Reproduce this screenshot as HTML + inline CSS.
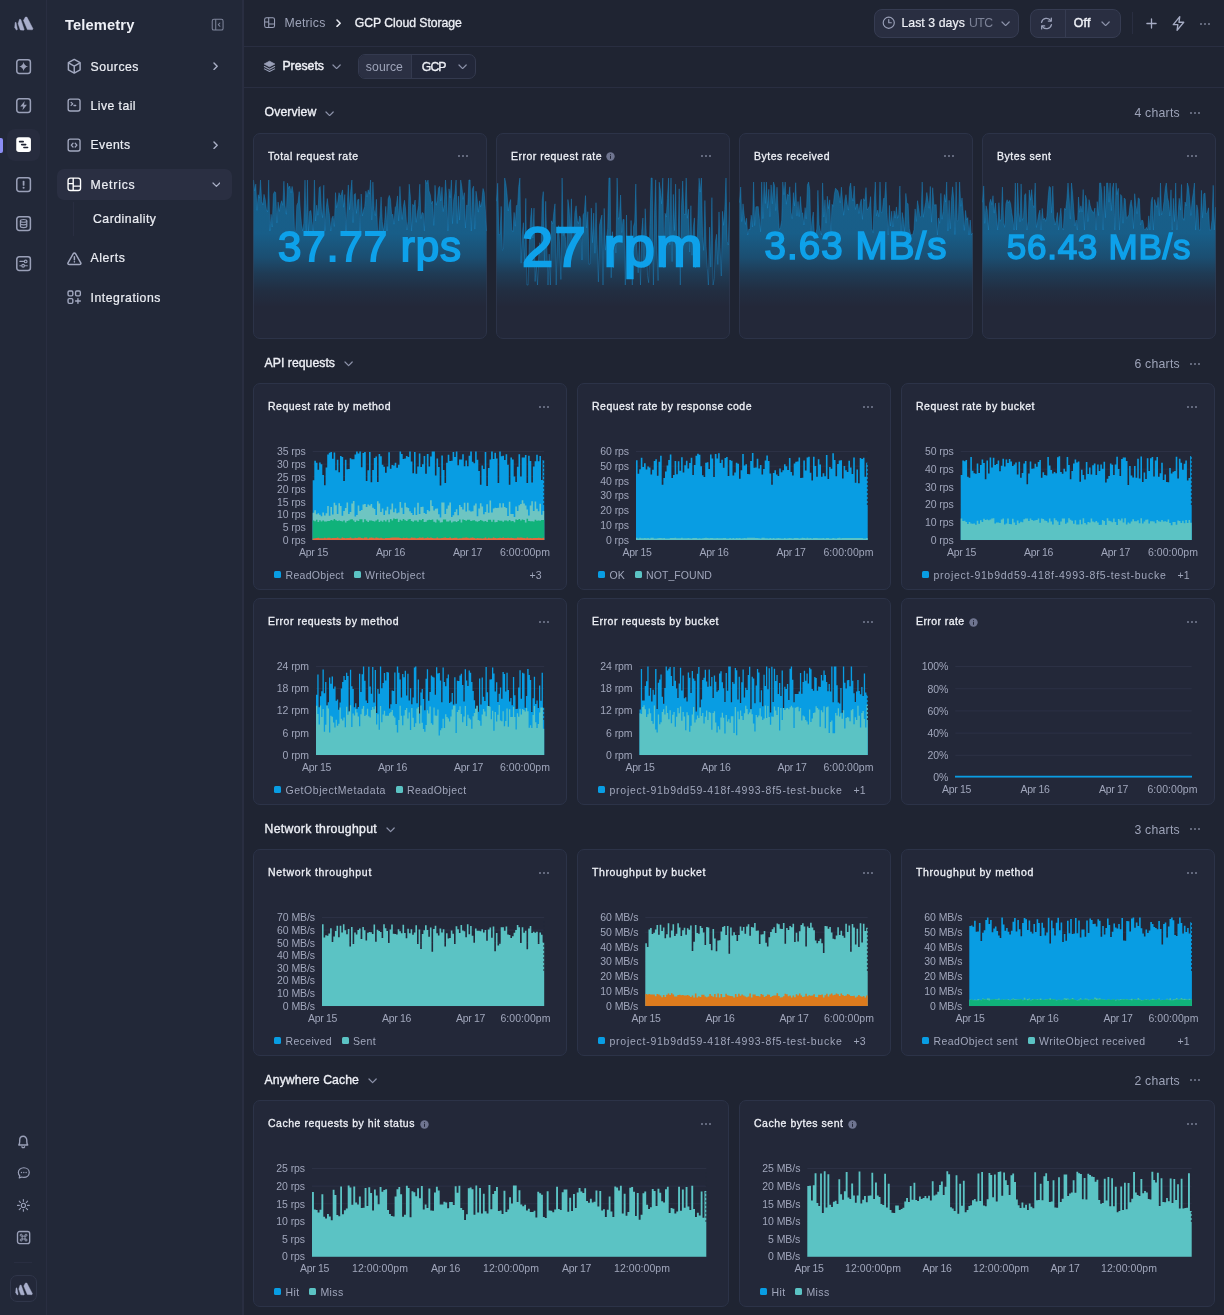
<!DOCTYPE html>
<html lang="en"><head><meta charset="utf-8"><title>Telemetry - GCP Cloud Storage</title>
<style>
html,body{margin:0;padding:0}
body{width:1224px;height:1315px;overflow:hidden;background:#1f2432;position:relative;font-family:"Liberation Sans",sans-serif;-webkit-font-smoothing:antialiased}
.t{position:absolute;white-space:nowrap;display:block}
.b{position:absolute;box-sizing:border-box;display:block}
.card{position:absolute;box-sizing:border-box;background:#232839;border:1px solid #2c3348;border-radius:7px;overflow:hidden}
#root{position:absolute;left:0;top:0;width:1224px;height:1315px;will-change:transform}
</style></head><body><div id="root">
<nav id="rail" aria-label="Products">
<div class="b" style="left:0px;top:0px;width:46px;height:1315px;background:#222838;"></div>
<div class="b" style="left:46px;top:0px;width:1px;height:1315px;background:#292e41;"></div>
<div class="b" style="left:0px;top:138px;width:3px;height:15px;background:#8b8df5;border-radius:0 2px 2px 0;"></div>
<div class="b" style="left:7px;top:129px;width:33px;height:32px;background:#272c3e;border-radius:8px;"></div>
<div class="b" style="left:14px;top:1262px;width:18px;height:1px;background:#292e41;"></div>
<div class="b" style="left:10px;top:1275px;width:27px;height:27px;background:#232839;border:1px solid #30364a;border-radius:7px;"></div>
<svg class="b" style="left:13.9px;top:15.8px;" width="20.5" height="15.5" viewBox="0 0 20.5 15.5" fill="none"><path d="M9.50 4.40 L11.40 1.00 L12.90 1.10 L19.00 12.80 L18.30 13.80 L13.40 13.60Z" fill="#a9afcc" stroke="#a9afcc" stroke-width="0.45" stroke-linejoin="round"/><path d="M4.10 7.70 L5.50 3.30 L6.80 3.50 L10.20 13.40 L9.70 14.20 L6.30 13.90Z" fill="#a9afcc" stroke="#a9afcc" stroke-width="0.45" stroke-linejoin="round"/><path d="M1.20 6.50 L2.00 6.30 L3.40 13.50 L2.40 14.10 L0.70 11.40Z" fill="#a9afcc" stroke="#a9afcc" stroke-width="0.45" stroke-linejoin="round"/></svg>
<svg class="b" style="left:13.8px;top:56.9px;" width="19.2" height="19.2" viewBox="0 0 24 24" fill="none"><rect x="3.5" y="3.5" width="17" height="17" rx="3" stroke="#9aa0b8" stroke-width="1.9" fill="none"/><path d="M12 6.4 C12.7 9.6 14.4 11.3 17.6 12 C14.4 12.7 12.7 14.4 12 17.6 C11.3 14.4 9.6 12.7 6.4 12 C9.6 11.3 11.3 9.6 12 6.4 Z" fill="#9aa0b8"/></svg>
<svg class="b" style="left:13.8px;top:95.9px;" width="19.2" height="19.2" viewBox="0 0 24 24" fill="none"><rect x="3.5" y="3.5" width="17" height="17" rx="3" stroke="#9aa0b8" stroke-width="1.9" fill="none"/><path d="M13.4 6.2 L7.8 13 H11.5 L10.6 17.8 L16.2 11 H12.5 Z" fill="#9aa0b8"/></svg>
<svg class="b" style="left:13.8px;top:135.4px;" width="19.2" height="19.2" viewBox="0 0 24 24" fill="none"><rect x="2.8" y="2.8" width="18.4" height="18.4" rx="3.4" fill="#ffffff"/><path d="M7 8.3 H11.5 M9.6 12 H14.6 M12.4 15.7 H17" stroke="#1f2333" stroke-width="2" stroke-linecap="round"/></svg>
<svg class="b" style="left:13.8px;top:174.9px;" width="19.2" height="19.2" viewBox="0 0 24 24" fill="none"><rect x="3.5" y="3.5" width="17" height="17" rx="3" stroke="#9aa0b8" stroke-width="1.9" fill="none"/><path d="M12 8.2 V12.4" stroke="#9aa0b8" stroke-width="2.2" stroke-linecap="round"/><circle cx="12" cy="15.9" r="1.3" fill="#9aa0b8"/></svg>
<svg class="b" style="left:13.8px;top:214.4px;" width="19.2" height="19.2" viewBox="0 0 24 24" fill="none"><rect x="3.5" y="3.5" width="17" height="17" rx="3" stroke="#9aa0b8" stroke-width="1.9" fill="none"/><ellipse cx="12" cy="8.6" rx="4" ry="1.7" stroke="#9aa0b8" stroke-width="1.5"/><path d="M8 8.6 V15.4 C8 16.4 9.8 17.1 12 17.1 C14.2 17.1 16 16.4 16 15.4 V8.6 M8 12 C8 13 9.8 13.7 12 13.7 C14.2 13.7 16 13 16 12" stroke="#9aa0b8" stroke-width="1.5"/></svg>
<svg class="b" style="left:13.8px;top:253.9px;" width="19.2" height="19.2" viewBox="0 0 24 24" fill="none"><rect x="3.5" y="3.5" width="17" height="17" rx="3" stroke="#9aa0b8" stroke-width="1.9" fill="none"/><path d="M7.4 9.3 H12.4 M7.4 14.7 H9.2 M14 14.7 H16.6" stroke="#9aa0b8" stroke-width="1.5" stroke-linecap="round"/><circle cx="14.6" cy="9.3" r="1.7" stroke="#9aa0b8" stroke-width="1.4"/><circle cx="11.4" cy="14.7" r="1.7" stroke="#9aa0b8" stroke-width="1.4"/></svg>
<svg class="b" style="left:14.15px;top:1131.95px;" width="18.5" height="18.5" viewBox="0 0 24 24" fill="none"><path d="M6.2 16.8 H17.8 C16.8 15.6 16.6 14.4 16.6 12.4 V10.6 C16.6 7.8 14.6 5.6 12 5.6 C9.4 5.6 7.4 7.8 7.4 10.6 V12.4 C7.4 14.4 7.2 15.6 6.2 16.8 Z" stroke="#9aa0b8" stroke-width="1.8" stroke-linejoin="round"/><path d="M10.3 19.2 C10.8 20 11.3 20.3 12 20.3 C12.7 20.3 13.2 20 13.7 19.2" stroke="#9aa0b8" stroke-width="1.8" stroke-linecap="round"/></svg>
<svg class="b" style="left:15.6px;top:1165.2px;" width="15.6" height="15.6" viewBox="0 0 24 24" fill="none"><path d="M12 4.2 C7.2 4.2 3.6 7.4 3.6 11.6 C3.6 13.6 4.4 15.3 5.8 16.6 L5 20 L8.8 18.5 C9.8 18.8 10.9 19 12 19 C16.8 19 20.4 15.8 20.4 11.6 C20.4 7.4 16.8 4.2 12 4.2 Z" stroke="#9aa0b8" stroke-width="1.8" stroke-linejoin="round"/><circle cx="8.4" cy="11.6" r="1.05" fill="#9aa0b8"/><circle cx="12" cy="11.6" r="1.05" fill="#9aa0b8"/><circle cx="15.6" cy="11.6" r="1.05" fill="#9aa0b8"/></svg>
<svg class="b" style="left:16.0px;top:1197.6px;" width="14.8" height="14.8" viewBox="0 0 24 24" fill="none"><circle cx="12" cy="12" r="3.4" stroke="#9aa0b8" stroke-width="1.8"/><path d="M18.60 12.00 L21.60 12.00" stroke="#9aa0b8" stroke-width="1.8" stroke-linecap="round"/><path d="M16.67 16.67 L18.79 18.79" stroke="#9aa0b8" stroke-width="1.8" stroke-linecap="round"/><path d="M12.00 18.60 L12.00 21.60" stroke="#9aa0b8" stroke-width="1.8" stroke-linecap="round"/><path d="M7.33 16.67 L5.21 18.79" stroke="#9aa0b8" stroke-width="1.8" stroke-linecap="round"/><path d="M5.40 12.00 L2.40 12.00" stroke="#9aa0b8" stroke-width="1.8" stroke-linecap="round"/><path d="M7.33 7.33 L5.21 5.21" stroke="#9aa0b8" stroke-width="1.8" stroke-linecap="round"/><path d="M12.00 5.40 L12.00 2.40" stroke="#9aa0b8" stroke-width="1.8" stroke-linecap="round"/><path d="M16.67 7.33 L18.79 5.21" stroke="#9aa0b8" stroke-width="1.8" stroke-linecap="round"/></svg>
<svg class="b" style="left:14.8px;top:1228.6px;" width="17.2" height="17.2" viewBox="0 0 24 24" fill="none"><rect x="3.5" y="3.5" width="17" height="17" rx="3" stroke="#9aa0b8" stroke-width="1.9" fill="none"/><path d="M10 10 H14 V14 H10 Z M10 10 V8.6 A1.4 1.4 0 1 0 8.6 10 H10 M14 10 H15.4 A1.4 1.4 0 1 0 14 8.6 V10 M14 14 V15.4 A1.4 1.4 0 1 0 15.4 14 H14 M10 14 H8.6 A1.4 1.4 0 1 0 10 15.4 V14" stroke="#9aa0b8" stroke-width="1.3"/></svg>
<svg class="b" style="left:14.6px;top:1282.2px;" width="18.86" height="14.26" viewBox="0 0 18.86 14.26" fill="none"><path d="M8.74 4.05 L10.49 0.92 L11.87 1.01 L17.48 11.78 L16.84 12.70 L12.33 12.51Z" fill="#a9afcc" stroke="#a9afcc" stroke-width="0.41" stroke-linejoin="round"/><path d="M3.77 7.08 L5.06 3.04 L6.26 3.22 L9.38 12.33 L8.92 13.06 L5.80 12.79Z" fill="#a9afcc" stroke="#a9afcc" stroke-width="0.41" stroke-linejoin="round"/><path d="M1.10 5.98 L1.84 5.80 L3.13 12.42 L2.21 12.97 L0.64 10.49Z" fill="#a9afcc" stroke="#a9afcc" stroke-width="0.41" stroke-linejoin="round"/></svg>
</nav>
<aside id="sidebar" aria-label="Telemetry">
<div class="b" style="left:47px;top:0px;width:195.5px;height:1315px;background:#222838;"></div>
<div class="b" style="left:242.4px;top:0px;width:1.6px;height:1315px;background:#292e41;"></div>
<span class="t" style="left:65.00px;top:14.60px;font-size:14.7px;line-height:20px;color:#eef0f6;font-weight:700;letter-spacing:0.126px;">Telemetry</span>
<div class="b" style="left:57px;top:169px;width:175px;height:31px;background:#2a2f42;border-radius:7px;"></div>
<span class="t" style="left:90.50px;top:57.60px;font-size:12.25px;line-height:18px;color:#eceef4;letter-spacing:0.509px;-webkit-text-stroke:0.2px #eceef4;">Sources</span>
<span class="t" style="left:90.50px;top:96.50px;font-size:12.25px;line-height:18px;color:#eceef4;letter-spacing:0.440px;-webkit-text-stroke:0.2px #eceef4;">Live tail</span>
<span class="t" style="left:90.50px;top:136.00px;font-size:12.25px;line-height:18px;color:#eceef4;letter-spacing:0.425px;-webkit-text-stroke:0.2px #eceef4;">Events</span>
<span class="t" style="left:90.50px;top:175.50px;font-size:12.25px;line-height:18px;color:#eceef4;letter-spacing:0.790px;-webkit-text-stroke:0.2px #eceef4;">Metrics</span>
<span class="t" style="left:93.00px;top:209.50px;font-size:12.25px;line-height:18px;color:#eceef4;letter-spacing:0.512px;-webkit-text-stroke:0.2px #eceef4;">Cardinality</span>
<span class="t" style="left:90.50px;top:249.00px;font-size:12.25px;line-height:18px;color:#eceef4;letter-spacing:0.614px;-webkit-text-stroke:0.2px #eceef4;">Alerts</span>
<span class="t" style="left:90.50px;top:288.50px;font-size:12.25px;line-height:18px;color:#eceef4;letter-spacing:0.540px;-webkit-text-stroke:0.2px #eceef4;">Integrations</span>
<div class="b" style="left:73px;top:202px;width:1px;height:34px;background:#292e41;"></div>
<svg class="b" style="left:209.55px;top:16.85px;" width="15.3" height="15.3" viewBox="0 0 24 24" fill="none"><rect x="3.5" y="3.5" width="17" height="17" rx="2.6" stroke="#7f859b" stroke-width="1.6"/><path d="M9 3.5 V20.5" stroke="#7f859b" stroke-width="1.6"/><path d="M15.6 9.4 L13 12 L15.6 14.6" stroke="#7f859b" stroke-width="1.6" stroke-linecap="round" stroke-linejoin="round"/></svg>
<svg class="b" style="left:65.05px;top:57.05px;" width="18.5" height="18.5" viewBox="0 0 24 24" fill="none"><path d="M12 3.2 L19.6 7.4 V16.6 L12 20.8 L4.4 16.6 V7.4 Z" stroke="#a3a9c0" stroke-width="1.9" stroke-linejoin="round"/><path d="M4.6 7.6 L12 11.8 L19.4 7.6 M12 11.8 V20.6" stroke="#a3a9c0" stroke-width="1.9" stroke-linejoin="round"/></svg>
<svg class="b" style="left:66.0px;top:97.4px;" width="16.2" height="16.2" viewBox="0 0 24 24" fill="none"><rect x="3.2" y="3.2" width="17.6" height="17.6" rx="3" stroke="#a3a9c0" stroke-width="2.0"/><path d="M7.6 8 L10 10.2 L7.6 12.4 M11.8 12.6 H14.4" stroke="#a3a9c0" stroke-width="1.9" stroke-linecap="round" stroke-linejoin="round"/></svg>
<svg class="b" style="left:66.0px;top:136.9px;" width="16.2" height="16.2" viewBox="0 0 24 24" fill="none"><rect x="3.2" y="3.2" width="17.6" height="17.6" rx="3" stroke="#a3a9c0" stroke-width="2.0"/><path d="M10.4 9.2 L7.8 12 L10.4 14.8 M13.6 9.2 L16.2 12 L13.6 14.8" stroke="#a3a9c0" stroke-width="1.9" stroke-linecap="round" stroke-linejoin="round"/></svg>
<svg class="b" style="left:66.0px;top:176.2px;" width="16.6" height="16.6" viewBox="0 0 24 24" fill="none"><rect x="3" y="3" width="18" height="18" rx="3.4" stroke="#ffffff" stroke-width="2"/><path d="M10.4 3 V21 M3 11 H10.4 M10.4 14.6 H21" stroke="#ffffff" stroke-width="2"/></svg>
<svg class="b" style="left:64.9px;top:248.6px;" width="18.8" height="18.8" viewBox="0 0 24 24" fill="none"><path d="M10.39 6.37 Q12.00 3.60 13.61 6.37 L19.79 17.03 Q21.40 19.80 18.20 19.80 L5.80 19.80 Q2.60 19.80 4.21 17.03Z" stroke="#a3a9c0" stroke-width="1.9" stroke-linejoin="round"/><path d="M12 10 V13.6" stroke="#a3a9c0" stroke-width="1.9" stroke-linecap="round"/><circle cx="12" cy="16.4" r="1" fill="#a3a9c0"/></svg>
<svg class="b" style="left:65.9px;top:289.3px;" width="16.4" height="16.4" viewBox="0 0 24 24" fill="none"><rect x="3" y="3" width="7" height="7" rx="1.8" stroke="#a3a9c0" stroke-width="2.0"/><rect x="14" y="3" width="7" height="7" rx="1.8" stroke="#a3a9c0" stroke-width="2.0"/><rect x="3" y="14" width="7" height="7" rx="1.8" stroke="#a3a9c0" stroke-width="2.0"/><path d="M17.5 14 V21 M14 17.5 H21" stroke="#a3a9c0" stroke-width="2.0" stroke-linecap="round"/></svg>
<svg class="b" style="left:213.4px;top:62.0px;" width="5.2" height="8.4" viewBox="0 0 5.2 8.4" fill="none"><path d="M1 1 L4.2 4.2 L1 7.4" stroke="#aab0c6" stroke-width="1.4" stroke-linecap="round" stroke-linejoin="round"/></svg>
<svg class="b" style="left:213.4px;top:141.0px;" width="5.2" height="8.4" viewBox="0 0 5.2 8.4" fill="none"><path d="M1 1 L4.2 4.2 L1 7.4" stroke="#aab0c6" stroke-width="1.4" stroke-linecap="round" stroke-linejoin="round"/></svg>
<svg class="b" style="left:211.6px;top:182.1px;" width="8.8" height="5.4" viewBox="0 0 8.8 5.4" fill="none"><path d="M1 1 L4.4 4.4 L7.8 1" stroke="#aab0c6" stroke-width="1.2" stroke-linecap="round" stroke-linejoin="round"/></svg>
</aside>
<header id="topbar">
<div class="b" style="left:244px;top:46px;width:980px;height:1px;background:#292e41;"></div>
<span class="t" style="left:284.50px;top:15.00px;font-size:12.25px;line-height:16px;color:#9da3b8;letter-spacing:0.218px;">Metrics</span>
<span class="t" style="left:354.80px;top:15.00px;font-size:12.25px;line-height:16px;color:#eef0f6;letter-spacing:-0.062px;-webkit-text-stroke:0.3px #eef0f6;">GCP Cloud Storage</span>
<div class="b" style="left:873.5px;top:9px;width:145.5px;height:29px;background:#292e41;border:1px solid #363c52;border-radius:8px;"></div>
<span class="t" style="left:901.40px;top:15.00px;font-size:12.25px;line-height:16px;color:#eef0f6;letter-spacing:0.077px;-webkit-text-stroke:0.2px #eef0f6;">Last 3 days</span>
<span class="t" style="left:969.00px;top:15.00px;font-size:12.25px;line-height:16px;color:#7d8398;letter-spacing:-0.559px;">UTC</span>
<div class="b" style="left:1029.5px;top:9px;width:91.5px;height:29px;background:#292e41;border:1px solid #363c52;border-radius:8px;"></div>
<div class="b" style="left:1064.5px;top:10px;width:1px;height:27px;background:#363c52;"></div>
<span class="t" style="left:1073.70px;top:15.00px;font-size:12.25px;line-height:16px;color:#eef0f6;letter-spacing:0.329px;-webkit-text-stroke:0.45px #eef0f6;">Off</span>
<div class="b" style="left:1132px;top:12px;width:1px;height:22px;background:#292e41;"></div>
<svg class="b" style="left:263.1px;top:16.4px;" width="13.2" height="13.2" viewBox="0 0 24 24" fill="none"><rect x="3" y="3" width="18" height="18" rx="3.4" stroke="#9aa0b8" stroke-width="1.9"/><path d="M10.4 3 V21 M3 11 H10.4 M10.4 14.6 H21" stroke="#9aa0b8" stroke-width="1.9"/></svg>
<svg class="b" style="left:336.0px;top:19.1px;" width="5.2" height="8.4" viewBox="0 0 5.2 8.4" fill="none"><path d="M1 1 L4.2 4.2 L1 7.4" stroke="#e6e8f0" stroke-width="1.5" stroke-linecap="round" stroke-linejoin="round"/></svg>
<svg class="b" style="left:880.95px;top:15.25px;" width="15.5" height="15.5" viewBox="0 0 24 24" fill="none"><circle cx="12" cy="12" r="8.6" stroke="#9aa0b8" stroke-width="1.8"/><path d="M12 7 V12 H16" stroke="#9aa0b8" stroke-width="1.8" stroke-linecap="round" stroke-linejoin="round"/></svg>
<svg class="b" style="left:1001.1px;top:20.7px;" width="9.2" height="5.6" viewBox="0 0 9.2 5.6" fill="none"><path d="M1 1 L4.6 4.6 L8.2 1" stroke="#8d93aa" stroke-width="1.2" stroke-linecap="round" stroke-linejoin="round"/></svg>
<svg class="b" style="left:1038.0px;top:14.5px;" width="17" height="17" viewBox="0 0 24 24" fill="none"><path d="M5 10.4 A7.2 7.2 0 0 1 18.2 8.2 M19 13.6 A7.2 7.2 0 0 1 5.8 15.8" stroke="#9aa0b8" stroke-width="1.8" stroke-linecap="round"/><path d="M18.8 4.4 V8.6 H14.6 M5.2 19.6 V15.4 H9.4" stroke="#9aa0b8" stroke-width="1.8" stroke-linecap="round" stroke-linejoin="round"/></svg>
<svg class="b" style="left:1101.1px;top:20.7px;" width="9.2" height="5.6" viewBox="0 0 9.2 5.6" fill="none"><path d="M1 1 L4.6 4.6 L8.2 1" stroke="#8d93aa" stroke-width="1.2" stroke-linecap="round" stroke-linejoin="round"/></svg>
<svg class="b" style="left:1144.9px;top:16.5px;" width="13" height="13" viewBox="0 0 24 24" fill="none"><path d="M12 3.5 V20.5 M3.5 12 H20.5" stroke="#a6acc4" stroke-width="2.4" stroke-linecap="round"/></svg>
<svg class="b" style="left:1168.8px;top:13.5px;" width="19" height="19" viewBox="0 0 24 24" fill="none"><path d="M13.6 3.4 L5.4 13.4 H11.2 L10.2 20.6 L18.6 10.4 H12.6 Z" stroke="#a6acc4" stroke-width="1.7" stroke-linejoin="round"/></svg>
<svg class="b" style="left:1199px;top:21.5px;" width="12" height="4" viewBox="0 0 12 4" fill="none"><circle cx="2" cy="2" r="0.95" fill="#7f859b"/><circle cx="6" cy="2" r="0.95" fill="#7f859b"/><circle cx="10" cy="2" r="0.95" fill="#7f859b"/></svg>
</header>
<div id="filterbar" role="toolbar">
<div class="b" style="left:244px;top:87px;width:980px;height:1px;background:#292e41;"></div>
<span class="t" style="left:282.40px;top:58.00px;font-size:12.25px;line-height:16px;color:#eef0f6;letter-spacing:0.010px;-webkit-text-stroke:0.45px #eef0f6;">Presets</span>
<div class="b" style="left:357.5px;top:54px;width:118.5px;height:24.5px;background:#222739;border:1px solid #343a4f;border-radius:7px;"></div>
<div class="b" style="left:358.5px;top:55px;width:52px;height:22.5px;background:#2b3043;border-radius:6px 0 0 6px;"></div>
<div class="b" style="left:410.5px;top:55px;width:1px;height:22.5px;background:#343a4f;"></div>
<span class="t" style="left:365.80px;top:58.50px;font-size:12.25px;line-height:16px;color:#9da3b8;letter-spacing:0.072px;">source</span>
<span class="t" style="left:421.80px;top:58.50px;font-size:12.25px;line-height:16px;color:#eef0f6;letter-spacing:-0.915px;-webkit-text-stroke:0.3px #eef0f6;">GCP</span>
<svg class="b" style="left:261.5px;top:58.5px;" width="15" height="15" viewBox="0 0 24 24" fill="none"><path d="M12 3.6 L20.4 8 L12 12.4 L3.6 8 Z" fill="#9aa0b8" stroke="#9aa0b8" stroke-width="1.4" stroke-linejoin="round"/><path d="M3.8 12 L12 16.3 L20.2 12 M3.8 15.8 L12 20.1 L20.2 15.8" stroke="#9aa0b8" stroke-width="1.7" stroke-linecap="round" stroke-linejoin="round"/></svg>
<svg class="b" style="left:332.4px;top:63.7px;" width="9.2" height="5.6" viewBox="0 0 9.2 5.6" fill="none"><path d="M1 1 L4.6 4.6 L8.2 1" stroke="#8d93aa" stroke-width="1.2" stroke-linecap="round" stroke-linejoin="round"/></svg>
<svg class="b" style="left:457.7px;top:63.7px;" width="9.2" height="5.6" viewBox="0 0 9.2 5.6" fill="none"><path d="M1 1 L4.6 4.6 L8.2 1" stroke="#8d93aa" stroke-width="1.2" stroke-linecap="round" stroke-linejoin="round"/></svg>
</div>
<main id="dashboard">
<span class="t" style="left:264.50px;top:104.30px;font-size:12.25px;line-height:16px;color:#eef0f6;letter-spacing:0.118px;-webkit-text-stroke:0.35px #eef0f6;">Overview</span>
<span class="t" style="left:1134.40px;top:105.00px;font-size:12.25px;line-height:16px;color:#9da3b8;letter-spacing:0.253px;">4 charts</span>
<svg class="b" style="left:1189px;top:110.8px;" width="12" height="4" viewBox="0 0 12 4" fill="none"><circle cx="2" cy="2" r="0.95" fill="#7f859b"/><circle cx="6" cy="2" r="0.95" fill="#7f859b"/><circle cx="10" cy="2" r="0.95" fill="#7f859b"/></svg>
<svg class="b" style="left:325.4px;top:110.5px;" width="9.2" height="5.6" viewBox="0 0 9.2 5.6" fill="none"><path d="M1 1 L4.6 4.6 L8.2 1" stroke="#8d93aa" stroke-width="1.2" stroke-linecap="round" stroke-linejoin="round"/></svg>
<span class="t" style="left:264.50px;top:355.10px;font-size:12.25px;line-height:16px;color:#eef0f6;letter-spacing:0.030px;-webkit-text-stroke:0.35px #eef0f6;">API requests</span>
<span class="t" style="left:1134.40px;top:355.80px;font-size:12.25px;line-height:16px;color:#9da3b8;letter-spacing:0.253px;">6 charts</span>
<svg class="b" style="left:1189px;top:361.6px;" width="12" height="4" viewBox="0 0 12 4" fill="none"><circle cx="2" cy="2" r="0.95" fill="#7f859b"/><circle cx="6" cy="2" r="0.95" fill="#7f859b"/><circle cx="10" cy="2" r="0.95" fill="#7f859b"/></svg>
<svg class="b" style="left:343.9px;top:361.3px;" width="9.2" height="5.6" viewBox="0 0 9.2 5.6" fill="none"><path d="M1 1 L4.6 4.6 L8.2 1" stroke="#8d93aa" stroke-width="1.2" stroke-linecap="round" stroke-linejoin="round"/></svg>
<span class="t" style="left:264.50px;top:820.90px;font-size:12.25px;line-height:16px;color:#eef0f6;letter-spacing:0.311px;-webkit-text-stroke:0.35px #eef0f6;">Network throughput</span>
<span class="t" style="left:1134.40px;top:821.60px;font-size:12.25px;line-height:16px;color:#9da3b8;letter-spacing:0.253px;">3 charts</span>
<svg class="b" style="left:1189px;top:827.4px;" width="12" height="4" viewBox="0 0 12 4" fill="none"><circle cx="2" cy="2" r="0.95" fill="#7f859b"/><circle cx="6" cy="2" r="0.95" fill="#7f859b"/><circle cx="10" cy="2" r="0.95" fill="#7f859b"/></svg>
<svg class="b" style="left:385.9px;top:827.1px;" width="9.2" height="5.6" viewBox="0 0 9.2 5.6" fill="none"><path d="M1 1 L4.6 4.6 L8.2 1" stroke="#8d93aa" stroke-width="1.2" stroke-linecap="round" stroke-linejoin="round"/></svg>
<span class="t" style="left:264.50px;top:1071.90px;font-size:12.25px;line-height:16px;color:#eef0f6;letter-spacing:0.086px;-webkit-text-stroke:0.35px #eef0f6;">Anywhere Cache</span>
<span class="t" style="left:1134.40px;top:1072.60px;font-size:12.25px;line-height:16px;color:#9da3b8;letter-spacing:0.253px;">2 charts</span>
<svg class="b" style="left:1189px;top:1078.4px;" width="12" height="4" viewBox="0 0 12 4" fill="none"><circle cx="2" cy="2" r="0.95" fill="#7f859b"/><circle cx="6" cy="2" r="0.95" fill="#7f859b"/><circle cx="10" cy="2" r="0.95" fill="#7f859b"/></svg>
<svg class="b" style="left:367.9px;top:1078.1px;" width="9.2" height="5.6" viewBox="0 0 9.2 5.6" fill="none"><path d="M1 1 L4.6 4.6 L8.2 1" stroke="#8d93aa" stroke-width="1.2" stroke-linecap="round" stroke-linejoin="round"/></svg>
<div class="card" style="left:253px;top:132.6px;width:234px;height:206.4px"></div>
<span class="t" style="left:268.00px;top:148.60px;font-size:10.5px;line-height:14px;color:#eef0f6;letter-spacing:0.521px;-webkit-text-stroke:0.3px #eef0f6;">Total request rate</span>
<svg class="b" style="left:457px;top:154px;" width="12" height="4" viewBox="0 0 12 4" fill="none"><circle cx="2" cy="2" r="0.95" fill="#7f859b"/><circle cx="6" cy="2" r="0.95" fill="#7f859b"/><circle cx="10" cy="2" r="0.95" fill="#7f859b"/></svg>
<div class="card" style="left:496px;top:132.6px;width:234px;height:206.4px"></div>
<span class="t" style="left:511.00px;top:148.60px;font-size:10.5px;line-height:14px;color:#eef0f6;letter-spacing:0.484px;-webkit-text-stroke:0.3px #eef0f6;">Error request rate</span>
<svg class="b" style="left:700px;top:154px;" width="12" height="4" viewBox="0 0 12 4" fill="none"><circle cx="2" cy="2" r="0.95" fill="#7f859b"/><circle cx="6" cy="2" r="0.95" fill="#7f859b"/><circle cx="10" cy="2" r="0.95" fill="#7f859b"/></svg>
<svg class="b" style="left:606.0px;top:151.5px;" width="9" height="9" viewBox="0 0 9 9" fill="none"><circle cx="4.5" cy="4.5" r="4.2" fill="#6f7590"/><rect x="4" y="3.9" width="1" height="2.9" fill="#232738"/><rect x="4" y="2.2" width="1" height="1" fill="#232738"/></svg>
<div class="card" style="left:739px;top:132.6px;width:234px;height:206.4px"></div>
<span class="t" style="left:754.00px;top:148.60px;font-size:10.5px;line-height:14px;color:#eef0f6;letter-spacing:0.510px;-webkit-text-stroke:0.3px #eef0f6;">Bytes received</span>
<svg class="b" style="left:943px;top:154px;" width="12" height="4" viewBox="0 0 12 4" fill="none"><circle cx="2" cy="2" r="0.95" fill="#7f859b"/><circle cx="6" cy="2" r="0.95" fill="#7f859b"/><circle cx="10" cy="2" r="0.95" fill="#7f859b"/></svg>
<div class="card" style="left:982px;top:132.6px;width:234px;height:206.4px"></div>
<span class="t" style="left:997.00px;top:148.60px;font-size:10.5px;line-height:14px;color:#eef0f6;letter-spacing:0.548px;-webkit-text-stroke:0.3px #eef0f6;">Bytes sent</span>
<svg class="b" style="left:1186px;top:154px;" width="12" height="4" viewBox="0 0 12 4" fill="none"><circle cx="2" cy="2" r="0.95" fill="#7f859b"/><circle cx="6" cy="2" r="0.95" fill="#7f859b"/><circle cx="10" cy="2" r="0.95" fill="#7f859b"/></svg>
<div class="card" style="left:253px;top:383.4px;width:314px;height:206.6px"></div>
<span class="t" style="left:268.00px;top:399.40px;font-size:10.5px;line-height:14px;color:#eef0f6;letter-spacing:0.497px;-webkit-text-stroke:0.3px #eef0f6;">Request rate by method</span>
<svg class="b" style="left:538px;top:405px;" width="12" height="4" viewBox="0 0 12 4" fill="none"><circle cx="2" cy="2" r="0.95" fill="#7f859b"/><circle cx="6" cy="2" r="0.95" fill="#7f859b"/><circle cx="10" cy="2" r="0.95" fill="#7f859b"/></svg>
<div class="card" style="left:577px;top:383.4px;width:314px;height:206.6px"></div>
<span class="t" style="left:592.00px;top:399.40px;font-size:10.5px;line-height:14px;color:#eef0f6;letter-spacing:0.485px;-webkit-text-stroke:0.3px #eef0f6;">Request rate by response code</span>
<svg class="b" style="left:862px;top:405px;" width="12" height="4" viewBox="0 0 12 4" fill="none"><circle cx="2" cy="2" r="0.95" fill="#7f859b"/><circle cx="6" cy="2" r="0.95" fill="#7f859b"/><circle cx="10" cy="2" r="0.95" fill="#7f859b"/></svg>
<div class="card" style="left:901px;top:383.4px;width:314px;height:206.6px"></div>
<span class="t" style="left:916.00px;top:399.40px;font-size:10.5px;line-height:14px;color:#eef0f6;letter-spacing:0.501px;-webkit-text-stroke:0.3px #eef0f6;">Request rate by bucket</span>
<svg class="b" style="left:1186px;top:405px;" width="12" height="4" viewBox="0 0 12 4" fill="none"><circle cx="2" cy="2" r="0.95" fill="#7f859b"/><circle cx="6" cy="2" r="0.95" fill="#7f859b"/><circle cx="10" cy="2" r="0.95" fill="#7f859b"/></svg>
<div class="card" style="left:253px;top:598.4px;width:314px;height:206.6px"></div>
<span class="t" style="left:268.00px;top:614.40px;font-size:10.5px;line-height:14px;color:#eef0f6;letter-spacing:0.522px;-webkit-text-stroke:0.3px #eef0f6;">Error requests by method</span>
<svg class="b" style="left:538px;top:620px;" width="12" height="4" viewBox="0 0 12 4" fill="none"><circle cx="2" cy="2" r="0.95" fill="#7f859b"/><circle cx="6" cy="2" r="0.95" fill="#7f859b"/><circle cx="10" cy="2" r="0.95" fill="#7f859b"/></svg>
<div class="card" style="left:577px;top:598.4px;width:314px;height:206.6px"></div>
<span class="t" style="left:592.00px;top:614.40px;font-size:10.5px;line-height:14px;color:#eef0f6;letter-spacing:0.526px;-webkit-text-stroke:0.3px #eef0f6;">Error requests by bucket</span>
<svg class="b" style="left:862px;top:620px;" width="12" height="4" viewBox="0 0 12 4" fill="none"><circle cx="2" cy="2" r="0.95" fill="#7f859b"/><circle cx="6" cy="2" r="0.95" fill="#7f859b"/><circle cx="10" cy="2" r="0.95" fill="#7f859b"/></svg>
<div class="card" style="left:901px;top:598.4px;width:314px;height:206.6px"></div>
<span class="t" style="left:916.00px;top:614.40px;font-size:10.5px;line-height:14px;color:#eef0f6;letter-spacing:0.415px;-webkit-text-stroke:0.3px #eef0f6;">Error rate</span>
<svg class="b" style="left:1186px;top:620px;" width="12" height="4" viewBox="0 0 12 4" fill="none"><circle cx="2" cy="2" r="0.95" fill="#7f859b"/><circle cx="6" cy="2" r="0.95" fill="#7f859b"/><circle cx="10" cy="2" r="0.95" fill="#7f859b"/></svg>
<svg class="b" style="left:968.5px;top:617.5px;" width="9" height="9" viewBox="0 0 9 9" fill="none"><circle cx="4.5" cy="4.5" r="4.2" fill="#6f7590"/><rect x="4" y="3.9" width="1" height="2.9" fill="#232738"/><rect x="4" y="2.2" width="1" height="1" fill="#232738"/></svg>
<div class="card" style="left:253px;top:849.4px;width:314px;height:206.6px"></div>
<span class="t" style="left:268.00px;top:865.40px;font-size:10.5px;line-height:14px;color:#eef0f6;letter-spacing:0.687px;-webkit-text-stroke:0.3px #eef0f6;">Network throughput</span>
<svg class="b" style="left:538px;top:871px;" width="12" height="4" viewBox="0 0 12 4" fill="none"><circle cx="2" cy="2" r="0.95" fill="#7f859b"/><circle cx="6" cy="2" r="0.95" fill="#7f859b"/><circle cx="10" cy="2" r="0.95" fill="#7f859b"/></svg>
<div class="card" style="left:577px;top:849.4px;width:314px;height:206.6px"></div>
<span class="t" style="left:592.00px;top:865.40px;font-size:10.5px;line-height:14px;color:#eef0f6;letter-spacing:0.622px;-webkit-text-stroke:0.3px #eef0f6;">Throughput by bucket</span>
<svg class="b" style="left:862px;top:871px;" width="12" height="4" viewBox="0 0 12 4" fill="none"><circle cx="2" cy="2" r="0.95" fill="#7f859b"/><circle cx="6" cy="2" r="0.95" fill="#7f859b"/><circle cx="10" cy="2" r="0.95" fill="#7f859b"/></svg>
<div class="card" style="left:901px;top:849.4px;width:314px;height:206.6px"></div>
<span class="t" style="left:916.00px;top:865.40px;font-size:10.5px;line-height:14px;color:#eef0f6;letter-spacing:0.617px;-webkit-text-stroke:0.3px #eef0f6;">Throughput by method</span>
<svg class="b" style="left:1186px;top:871px;" width="12" height="4" viewBox="0 0 12 4" fill="none"><circle cx="2" cy="2" r="0.95" fill="#7f859b"/><circle cx="6" cy="2" r="0.95" fill="#7f859b"/><circle cx="10" cy="2" r="0.95" fill="#7f859b"/></svg>
<div class="card" style="left:253px;top:1100.4px;width:476px;height:206.6px"></div>
<span class="t" style="left:268.00px;top:1116.40px;font-size:10.5px;line-height:14px;color:#eef0f6;letter-spacing:0.518px;-webkit-text-stroke:0.3px #eef0f6;">Cache requests by hit status</span>
<svg class="b" style="left:700px;top:1122px;" width="12" height="4" viewBox="0 0 12 4" fill="none"><circle cx="2" cy="2" r="0.95" fill="#7f859b"/><circle cx="6" cy="2" r="0.95" fill="#7f859b"/><circle cx="10" cy="2" r="0.95" fill="#7f859b"/></svg>
<svg class="b" style="left:419.5px;top:1119.5px;" width="9" height="9" viewBox="0 0 9 9" fill="none"><circle cx="4.5" cy="4.5" r="4.2" fill="#6f7590"/><rect x="4" y="3.9" width="1" height="2.9" fill="#232738"/><rect x="4" y="2.2" width="1" height="1" fill="#232738"/></svg>
<div class="card" style="left:739px;top:1100.4px;width:476px;height:206.6px"></div>
<span class="t" style="left:754.00px;top:1116.40px;font-size:10.5px;line-height:14px;color:#eef0f6;letter-spacing:0.523px;-webkit-text-stroke:0.3px #eef0f6;">Cache bytes sent</span>
<svg class="b" style="left:1186px;top:1122px;" width="12" height="4" viewBox="0 0 12 4" fill="none"><circle cx="2" cy="2" r="0.95" fill="#7f859b"/><circle cx="6" cy="2" r="0.95" fill="#7f859b"/><circle cx="10" cy="2" r="0.95" fill="#7f859b"/></svg>
<svg class="b" style="left:847.5px;top:1119.5px;" width="9" height="9" viewBox="0 0 9 9" fill="none"><circle cx="4.5" cy="4.5" r="4.2" fill="#6f7590"/><rect x="4" y="3.9" width="1" height="2.9" fill="#232738"/><rect x="4" y="2.2" width="1" height="1" fill="#232738"/></svg>
<svg class="b" style="left:253px;top:133px;border-radius:7px;" width="234" height="206" viewBox="0 0 234 206" fill="none"><defs><linearGradient id="g11" x1="0" y1="40" x2="0" y2="174" gradientUnits="userSpaceOnUse"><stop offset="0" stop-color="#0c98de" stop-opacity="0.5"/><stop offset="0.45" stop-color="#0c98de" stop-opacity="0.48"/><stop offset="0.63" stop-color="#0c98de" stop-opacity="0.34"/><stop offset="0.75" stop-color="#0c98de" stop-opacity="0.17"/><stop offset="0.88" stop-color="#0c98de" stop-opacity="0.05"/><stop offset="1" stop-color="#0c98de" stop-opacity="0"/></linearGradient></defs><path d="M0.5 185L0.5 47.0 1.7 57.9 2.8 51.1 4.0 77.4 5.2 61.7 6.4 65.2 7.5 47.0 8.7 68.4 9.9 72.1 11.0 61.3 12.2 66.3 13.4 76.3 14.6 78.8 15.7 47.0 16.9 98.0 18.1 81.3 19.2 94.0 20.4 60.9 21.6 58.6 22.7 59.5 23.9 89.9 25.1 69.1 26.3 78.5 27.4 71.7 28.6 67.7 29.8 72.4 30.9 48.2 32.1 73.0 33.3 81.3 34.5 50.1 35.6 55.5 36.8 53.0 38.0 59.8 39.1 53.4 40.3 60.2 41.5 98.0 42.7 98.0 43.8 72.4 45.0 69.6 46.2 58.6 47.3 77.0 48.5 90.9 49.7 98.0 50.8 90.1 52.0 47.1 53.2 98.0 54.4 47.0 55.5 98.0 56.7 78.2 57.9 77.5 59.0 88.5 60.2 98.0 61.4 47.0 62.6 88.0 63.7 72.1 64.9 82.3 66.1 55.1 67.2 53.5 68.4 76.1 69.6 84.7 70.8 52.2 71.9 98.0 73.1 75.9 74.3 65.5 75.4 74.7 76.6 82.7 77.8 98.0 78.9 85.2 80.1 82.9 81.3 93.5 82.5 59.6 83.6 74.7 84.8 69.0 86.0 59.7 87.1 63.4 88.3 61.4 89.5 56.9 90.7 74.3 91.8 61.5 93.0 98.0 94.2 72.5 95.3 51.9 96.5 76.7 97.7 58.2 98.9 47.0 100.0 89.7 101.2 61.5 102.4 60.4 103.5 80.4 104.7 66.7 105.9 66.2 107.0 98.0 108.2 61.0 109.4 82.9 110.6 76.8 111.7 73.5 112.9 58.2 114.1 63.9 115.2 56.8 116.4 61.2 117.6 47.0 118.8 86.9 119.9 49.1 121.1 76.7 122.3 82.7 123.4 66.3 124.6 98.0 125.8 98.0 127.0 82.4 128.1 63.9 129.3 88.7 130.5 98.0 131.6 89.4 132.8 73.3 134.0 98.0 135.1 66.1 136.3 62.4 137.5 66.2 138.7 82.3 139.8 81.2 141.0 91.3 142.2 74.3 143.3 73.1 144.5 62.9 145.7 87.9 146.9 53.4 148.0 72.5 149.2 86.5 150.4 73.4 151.5 67.2 152.7 77.0 153.9 97.1 155.1 88.2 156.2 51.2 157.4 63.5 158.6 98.0 159.7 71.4 160.9 73.3 162.1 67.0 163.2 89.4 164.4 79.5 165.6 72.6 166.8 51.2 167.9 85.6 169.1 79.5 170.3 80.3 171.4 98.0 172.6 47.0 173.8 50.9 175.0 47.0 176.1 57.9 177.3 61.8 178.5 70.7 179.6 68.2 180.8 92.5 182.0 52.3 183.2 72.2 184.3 67.8 185.5 55.0 186.7 53.3 187.8 68.1 189.0 54.2 190.2 78.6 191.3 71.7 192.5 47.0 193.7 64.0 194.9 98.0 196.0 55.8 197.2 64.8 198.4 47.0 199.5 90.6 200.7 66.9 201.9 60.2 203.1 47.0 204.2 90.6 205.4 63.1 206.6 87.1 207.7 47.0 208.9 54.3 210.1 66.4 211.3 59.7 212.4 95.0 213.6 72.1 214.8 73.1 215.9 47.0 217.1 47.0 218.3 98.0 219.4 56.2 220.6 53.2 221.8 96.2 223.0 58.2 224.1 65.6 225.3 79.2 226.5 67.8 227.6 74.0 228.8 68.8 230.0 55.5 231.2 59.5 232.3 75.4 233.5 98.0L233.5 185Z" fill="url(#g11)"/><path d="M0.5 47.0 1.7 57.9 2.8 51.1 4.0 77.4 5.2 61.7 6.4 65.2 7.5 47.0 8.7 68.4 9.9 72.1 11.0 61.3 12.2 66.3 13.4 76.3 14.6 78.8 15.7 47.0 16.9 98.0 18.1 81.3 19.2 94.0 20.4 60.9 21.6 58.6 22.7 59.5 23.9 89.9 25.1 69.1 26.3 78.5 27.4 71.7 28.6 67.7 29.8 72.4 30.9 48.2 32.1 73.0 33.3 81.3 34.5 50.1 35.6 55.5 36.8 53.0 38.0 59.8 39.1 53.4 40.3 60.2 41.5 98.0 42.7 98.0 43.8 72.4 45.0 69.6 46.2 58.6 47.3 77.0 48.5 90.9 49.7 98.0 50.8 90.1 52.0 47.1 53.2 98.0 54.4 47.0 55.5 98.0 56.7 78.2 57.9 77.5 59.0 88.5 60.2 98.0 61.4 47.0 62.6 88.0 63.7 72.1 64.9 82.3 66.1 55.1 67.2 53.5 68.4 76.1 69.6 84.7 70.8 52.2 71.9 98.0 73.1 75.9 74.3 65.5 75.4 74.7 76.6 82.7 77.8 98.0 78.9 85.2 80.1 82.9 81.3 93.5 82.5 59.6 83.6 74.7 84.8 69.0 86.0 59.7 87.1 63.4 88.3 61.4 89.5 56.9 90.7 74.3 91.8 61.5 93.0 98.0 94.2 72.5 95.3 51.9 96.5 76.7 97.7 58.2 98.9 47.0 100.0 89.7 101.2 61.5 102.4 60.4 103.5 80.4 104.7 66.7 105.9 66.2 107.0 98.0 108.2 61.0 109.4 82.9 110.6 76.8 111.7 73.5 112.9 58.2 114.1 63.9 115.2 56.8 116.4 61.2 117.6 47.0 118.8 86.9 119.9 49.1 121.1 76.7 122.3 82.7 123.4 66.3 124.6 98.0 125.8 98.0 127.0 82.4 128.1 63.9 129.3 88.7 130.5 98.0 131.6 89.4 132.8 73.3 134.0 98.0 135.1 66.1 136.3 62.4 137.5 66.2 138.7 82.3 139.8 81.2 141.0 91.3 142.2 74.3 143.3 73.1 144.5 62.9 145.7 87.9 146.9 53.4 148.0 72.5 149.2 86.5 150.4 73.4 151.5 67.2 152.7 77.0 153.9 97.1 155.1 88.2 156.2 51.2 157.4 63.5 158.6 98.0 159.7 71.4 160.9 73.3 162.1 67.0 163.2 89.4 164.4 79.5 165.6 72.6 166.8 51.2 167.9 85.6 169.1 79.5 170.3 80.3 171.4 98.0 172.6 47.0 173.8 50.9 175.0 47.0 176.1 57.9 177.3 61.8 178.5 70.7 179.6 68.2 180.8 92.5 182.0 52.3 183.2 72.2 184.3 67.8 185.5 55.0 186.7 53.3 187.8 68.1 189.0 54.2 190.2 78.6 191.3 71.7 192.5 47.0 193.7 64.0 194.9 98.0 196.0 55.8 197.2 64.8 198.4 47.0 199.5 90.6 200.7 66.9 201.9 60.2 203.1 47.0 204.2 90.6 205.4 63.1 206.6 87.1 207.7 47.0 208.9 54.3 210.1 66.4 211.3 59.7 212.4 95.0 213.6 72.1 214.8 73.1 215.9 47.0 217.1 47.0 218.3 98.0 219.4 56.2 220.6 53.2 221.8 96.2 223.0 58.2 224.1 65.6 225.3 79.2 226.5 67.8 227.6 74.0 228.8 68.8 230.0 55.5 231.2 59.5 232.3 75.4 233.5 98.0" stroke="#1a8fd0" stroke-opacity="0.38" stroke-width="1" stroke-linejoin="round" fill="none"/></svg>
<span class="t" style="left:278.00px;top:222.50px;font-size:42px;line-height:48px;color:#0ea1ea;letter-spacing:0.987px;-webkit-text-stroke:1.76px #0ea1ea;">37.77 rps</span>
<svg class="b" style="left:496px;top:133px;border-radius:7px;" width="234" height="206" viewBox="0 0 234 206" fill="none"><defs><linearGradient id="g12" x1="0" y1="40" x2="0" y2="174" gradientUnits="userSpaceOnUse"><stop offset="0" stop-color="#0c98de" stop-opacity="0.5"/><stop offset="0.45" stop-color="#0c98de" stop-opacity="0.48"/><stop offset="0.63" stop-color="#0c98de" stop-opacity="0.34"/><stop offset="0.75" stop-color="#0c98de" stop-opacity="0.17"/><stop offset="0.88" stop-color="#0c98de" stop-opacity="0.05"/><stop offset="1" stop-color="#0c98de" stop-opacity="0"/></linearGradient></defs><path d="M0.5 185L0.5 68.2 1.7 50.2 2.8 101.8 4.0 101.5 5.2 73.4 6.4 117.2 7.5 116.1 8.7 45.0 9.9 50.9 11.0 60.6 12.2 78.1 13.4 70.3 14.6 66.5 15.7 96.6 16.9 98.9 18.1 79.4 19.2 93.3 20.4 72.5 21.6 72.7 22.7 53.5 23.9 45.0 25.1 130.2 26.3 101.5 27.4 89.7 28.6 129.4 29.8 65.4 30.9 152.0 32.1 152.0 33.3 110.3 34.5 86.6 35.6 75.1 36.8 105.1 38.0 75.1 39.1 148.5 40.3 130.2 41.5 152.0 42.7 123.9 43.8 109.7 45.0 119.2 46.2 67.4 47.3 58.6 48.5 132.1 49.7 68.3 50.8 113.4 52.0 152.0 53.2 121.1 54.4 152.0 55.5 87.8 56.7 90.9 57.9 78.5 59.0 70.8 60.2 152.0 61.4 101.2 62.6 92.6 63.7 113.1 64.9 146.5 66.1 45.0 67.2 102.6 68.4 97.5 69.6 106.2 70.8 123.8 71.9 66.5 73.1 75.3 74.3 98.8 75.4 65.8 76.6 117.2 77.8 101.3 78.9 79.3 80.1 72.8 81.3 87.6 82.5 90.6 83.6 82.9 84.8 86.1 86.0 127.1 87.1 81.9 88.3 79.7 89.5 62.6 90.7 95.0 91.8 78.7 93.0 131.4 94.2 130.8 95.3 75.1 96.5 109.7 97.7 80.1 98.9 120.3 100.0 69.7 101.2 111.9 102.4 148.9 103.5 92.3 104.7 86.6 105.9 82.0 107.0 152.0 108.2 75.4 109.4 117.2 110.6 104.8 111.7 95.2 112.9 45.0 114.1 45.0 115.2 144.8 116.4 98.7 117.6 134.8 118.8 106.6 119.9 119.9 121.1 45.0 122.3 86.3 123.4 83.6 124.6 62.0 125.8 99.6 127.0 86.4 128.1 86.5 129.3 152.0 130.5 82.0 131.6 127.3 132.8 138.2 134.0 132.7 135.1 87.5 136.3 152.0 137.5 93.6 138.7 89.1 139.8 51.0 141.0 116.1 142.2 139.8 143.3 105.6 144.5 152.0 145.7 98.5 146.9 85.0 148.0 135.1 149.2 75.7 150.4 104.0 151.5 142.8 152.7 149.7 153.9 91.7 155.1 45.0 156.2 45.0 157.4 152.0 158.6 77.9 159.7 46.8 160.9 117.8 162.1 147.6 163.2 49.2 164.4 57.1 165.6 70.8 166.8 45.0 167.9 135.0 169.1 80.3 170.3 84.0 171.4 65.4 172.6 45.0 173.8 111.7 175.0 45.0 176.1 128.6 177.3 61.4 178.5 97.5 179.6 51.1 180.8 119.5 182.0 111.5 183.2 55.8 184.3 152.0 185.5 74.4 186.7 48.0 187.8 80.3 189.0 82.0 190.2 45.0 191.3 85.3 192.5 76.2 193.7 119.1 194.9 72.7 196.0 122.3 197.2 95.4 198.4 84.9 199.5 134.9 200.7 125.3 201.9 85.3 203.1 45.2 204.2 59.0 205.4 45.0 206.6 103.4 207.7 117.4 208.9 67.5 210.1 113.7 211.3 135.6 212.4 152.0 213.6 94.1 214.8 134.1 215.9 64.6 217.1 152.0 218.3 145.3 219.4 108.9 220.6 101.3 221.8 131.5 223.0 78.9 224.1 114.9 225.3 143.0 226.5 78.3 227.6 92.4 228.8 76.5 230.0 45.0 231.2 108.5 232.3 112.0 233.5 69.2L233.5 185Z" fill="url(#g12)"/><path d="M0.5 68.2 1.7 50.2 2.8 101.8 4.0 101.5 5.2 73.4 6.4 117.2 7.5 116.1 8.7 45.0 9.9 50.9 11.0 60.6 12.2 78.1 13.4 70.3 14.6 66.5 15.7 96.6 16.9 98.9 18.1 79.4 19.2 93.3 20.4 72.5 21.6 72.7 22.7 53.5 23.9 45.0 25.1 130.2 26.3 101.5 27.4 89.7 28.6 129.4 29.8 65.4 30.9 152.0 32.1 152.0 33.3 110.3 34.5 86.6 35.6 75.1 36.8 105.1 38.0 75.1 39.1 148.5 40.3 130.2 41.5 152.0 42.7 123.9 43.8 109.7 45.0 119.2 46.2 67.4 47.3 58.6 48.5 132.1 49.7 68.3 50.8 113.4 52.0 152.0 53.2 121.1 54.4 152.0 55.5 87.8 56.7 90.9 57.9 78.5 59.0 70.8 60.2 152.0 61.4 101.2 62.6 92.6 63.7 113.1 64.9 146.5 66.1 45.0 67.2 102.6 68.4 97.5 69.6 106.2 70.8 123.8 71.9 66.5 73.1 75.3 74.3 98.8 75.4 65.8 76.6 117.2 77.8 101.3 78.9 79.3 80.1 72.8 81.3 87.6 82.5 90.6 83.6 82.9 84.8 86.1 86.0 127.1 87.1 81.9 88.3 79.7 89.5 62.6 90.7 95.0 91.8 78.7 93.0 131.4 94.2 130.8 95.3 75.1 96.5 109.7 97.7 80.1 98.9 120.3 100.0 69.7 101.2 111.9 102.4 148.9 103.5 92.3 104.7 86.6 105.9 82.0 107.0 152.0 108.2 75.4 109.4 117.2 110.6 104.8 111.7 95.2 112.9 45.0 114.1 45.0 115.2 144.8 116.4 98.7 117.6 134.8 118.8 106.6 119.9 119.9 121.1 45.0 122.3 86.3 123.4 83.6 124.6 62.0 125.8 99.6 127.0 86.4 128.1 86.5 129.3 152.0 130.5 82.0 131.6 127.3 132.8 138.2 134.0 132.7 135.1 87.5 136.3 152.0 137.5 93.6 138.7 89.1 139.8 51.0 141.0 116.1 142.2 139.8 143.3 105.6 144.5 152.0 145.7 98.5 146.9 85.0 148.0 135.1 149.2 75.7 150.4 104.0 151.5 142.8 152.7 149.7 153.9 91.7 155.1 45.0 156.2 45.0 157.4 152.0 158.6 77.9 159.7 46.8 160.9 117.8 162.1 147.6 163.2 49.2 164.4 57.1 165.6 70.8 166.8 45.0 167.9 135.0 169.1 80.3 170.3 84.0 171.4 65.4 172.6 45.0 173.8 111.7 175.0 45.0 176.1 128.6 177.3 61.4 178.5 97.5 179.6 51.1 180.8 119.5 182.0 111.5 183.2 55.8 184.3 152.0 185.5 74.4 186.7 48.0 187.8 80.3 189.0 82.0 190.2 45.0 191.3 85.3 192.5 76.2 193.7 119.1 194.9 72.7 196.0 122.3 197.2 95.4 198.4 84.9 199.5 134.9 200.7 125.3 201.9 85.3 203.1 45.2 204.2 59.0 205.4 45.0 206.6 103.4 207.7 117.4 208.9 67.5 210.1 113.7 211.3 135.6 212.4 152.0 213.6 94.1 214.8 134.1 215.9 64.6 217.1 152.0 218.3 145.3 219.4 108.9 220.6 101.3 221.8 131.5 223.0 78.9 224.1 114.9 225.3 143.0 226.5 78.3 227.6 92.4 228.8 76.5 230.0 45.0 231.2 108.5 232.3 112.0 233.5 69.2" stroke="#1a8fd0" stroke-opacity="0.38" stroke-width="1" stroke-linejoin="round" fill="none"/></svg>
<span class="t" style="left:522.00px;top:215.50px;font-size:56px;line-height:62px;color:#0ea1ea;letter-spacing:1.284px;-webkit-text-stroke:2.35px #0ea1ea;">27 rpm</span>
<svg class="b" style="left:739px;top:133px;border-radius:7px;" width="234" height="206" viewBox="0 0 234 206" fill="none"><defs><linearGradient id="g13" x1="0" y1="40" x2="0" y2="174" gradientUnits="userSpaceOnUse"><stop offset="0" stop-color="#0c98de" stop-opacity="0.5"/><stop offset="0.45" stop-color="#0c98de" stop-opacity="0.48"/><stop offset="0.63" stop-color="#0c98de" stop-opacity="0.34"/><stop offset="0.75" stop-color="#0c98de" stop-opacity="0.17"/><stop offset="0.88" stop-color="#0c98de" stop-opacity="0.05"/><stop offset="1" stop-color="#0c98de" stop-opacity="0"/></linearGradient></defs><path d="M0.5 185L0.5 69.6 1.7 54.0 2.8 88.6 4.0 70.8 5.2 82.2 6.4 91.5 7.5 85.2 8.7 102.0 9.9 96.0 11.0 96.7 12.2 82.2 13.4 94.0 14.6 49.0 15.7 92.6 16.9 73.8 18.1 73.7 19.2 73.5 20.4 85.6 21.6 98.8 22.7 49.0 23.9 85.7 25.1 49.0 26.3 70.5 27.4 49.0 28.6 75.3 29.8 56.3 30.9 83.8 32.1 51.9 33.3 70.8 34.5 49.0 35.6 52.8 36.8 77.6 38.0 54.2 39.1 76.9 40.3 96.7 41.5 94.3 42.7 87.2 43.8 49.0 45.0 61.6 46.2 49.0 47.3 71.3 48.5 61.3 49.7 62.9 50.8 53.8 52.0 79.2 53.2 85.7 54.4 59.6 55.5 72.9 56.7 49.7 57.9 82.9 59.0 68.5 60.2 83.6 61.4 63.5 62.6 79.2 63.7 80.0 64.9 92.1 66.1 74.6 67.2 85.8 68.4 52.1 69.6 49.0 70.8 56.9 71.9 101.1 73.1 86.6 74.3 79.0 75.4 102.0 76.6 102.0 77.8 96.0 78.9 57.3 80.1 91.8 81.3 97.8 82.5 102.0 83.6 49.9 84.8 84.0 86.0 66.8 87.1 90.3 88.3 63.2 89.5 75.6 90.7 66.8 91.8 102.0 93.0 71.3 94.2 73.3 95.3 61.7 96.5 55.2 97.7 56.5 98.9 57.8 100.0 62.8 101.2 69.8 102.4 54.1 103.5 68.1 104.7 82.3 105.9 66.8 107.0 61.6 108.2 71.2 109.4 77.2 110.6 54.2 111.7 50.0 112.9 64.3 114.1 68.1 115.2 53.0 116.4 76.5 117.6 71.3 118.8 71.1 119.9 80.5 121.1 70.7 122.3 66.3 123.4 86.4 124.6 65.6 125.8 68.0 127.0 54.6 128.1 77.1 129.3 75.2 130.5 72.9 131.6 63.6 132.8 95.7 134.0 99.7 135.1 72.5 136.3 49.0 137.5 82.8 138.7 77.1 139.8 83.8 141.0 49.0 142.2 79.5 143.3 79.1 144.5 65.4 145.7 65.5 146.9 49.0 148.0 79.8 149.2 102.0 150.4 72.3 151.5 93.0 152.7 78.2 153.9 94.1 155.1 77.8 156.2 85.2 157.4 73.9 158.6 85.3 159.7 81.3 160.9 53.0 162.1 102.0 163.2 79.5 164.4 86.3 165.6 98.5 166.8 60.4 167.9 70.5 169.1 70.7 170.3 95.6 171.4 100.3 172.6 102.0 173.8 101.5 175.0 96.7 176.1 75.9 177.3 88.5 178.5 67.7 179.6 74.5 180.8 83.7 182.0 83.9 183.2 49.0 184.3 84.3 185.5 75.7 186.7 69.3 187.8 59.5 189.0 67.4 190.2 75.4 191.3 53.4 192.5 89.2 193.7 54.7 194.9 71.7 196.0 72.0 197.2 71.5 198.4 102.0 199.5 85.0 200.7 90.4 201.9 60.3 203.1 86.3 204.2 78.2 205.4 61.5 206.6 69.2 207.7 49.0 208.9 98.0 210.1 67.3 211.3 95.8 212.4 67.6 213.6 53.8 214.8 66.6 215.9 101.6 217.1 49.0 218.3 88.0 219.4 87.5 220.6 49.0 221.8 73.4 223.0 64.9 224.1 77.8 225.3 97.4 226.5 77.5 227.6 86.9 228.8 84.6 230.0 102.0 231.2 87.0 232.3 102.0 233.5 99.9L233.5 185Z" fill="url(#g13)"/><path d="M0.5 69.6 1.7 54.0 2.8 88.6 4.0 70.8 5.2 82.2 6.4 91.5 7.5 85.2 8.7 102.0 9.9 96.0 11.0 96.7 12.2 82.2 13.4 94.0 14.6 49.0 15.7 92.6 16.9 73.8 18.1 73.7 19.2 73.5 20.4 85.6 21.6 98.8 22.7 49.0 23.9 85.7 25.1 49.0 26.3 70.5 27.4 49.0 28.6 75.3 29.8 56.3 30.9 83.8 32.1 51.9 33.3 70.8 34.5 49.0 35.6 52.8 36.8 77.6 38.0 54.2 39.1 76.9 40.3 96.7 41.5 94.3 42.7 87.2 43.8 49.0 45.0 61.6 46.2 49.0 47.3 71.3 48.5 61.3 49.7 62.9 50.8 53.8 52.0 79.2 53.2 85.7 54.4 59.6 55.5 72.9 56.7 49.7 57.9 82.9 59.0 68.5 60.2 83.6 61.4 63.5 62.6 79.2 63.7 80.0 64.9 92.1 66.1 74.6 67.2 85.8 68.4 52.1 69.6 49.0 70.8 56.9 71.9 101.1 73.1 86.6 74.3 79.0 75.4 102.0 76.6 102.0 77.8 96.0 78.9 57.3 80.1 91.8 81.3 97.8 82.5 102.0 83.6 49.9 84.8 84.0 86.0 66.8 87.1 90.3 88.3 63.2 89.5 75.6 90.7 66.8 91.8 102.0 93.0 71.3 94.2 73.3 95.3 61.7 96.5 55.2 97.7 56.5 98.9 57.8 100.0 62.8 101.2 69.8 102.4 54.1 103.5 68.1 104.7 82.3 105.9 66.8 107.0 61.6 108.2 71.2 109.4 77.2 110.6 54.2 111.7 50.0 112.9 64.3 114.1 68.1 115.2 53.0 116.4 76.5 117.6 71.3 118.8 71.1 119.9 80.5 121.1 70.7 122.3 66.3 123.4 86.4 124.6 65.6 125.8 68.0 127.0 54.6 128.1 77.1 129.3 75.2 130.5 72.9 131.6 63.6 132.8 95.7 134.0 99.7 135.1 72.5 136.3 49.0 137.5 82.8 138.7 77.1 139.8 83.8 141.0 49.0 142.2 79.5 143.3 79.1 144.5 65.4 145.7 65.5 146.9 49.0 148.0 79.8 149.2 102.0 150.4 72.3 151.5 93.0 152.7 78.2 153.9 94.1 155.1 77.8 156.2 85.2 157.4 73.9 158.6 85.3 159.7 81.3 160.9 53.0 162.1 102.0 163.2 79.5 164.4 86.3 165.6 98.5 166.8 60.4 167.9 70.5 169.1 70.7 170.3 95.6 171.4 100.3 172.6 102.0 173.8 101.5 175.0 96.7 176.1 75.9 177.3 88.5 178.5 67.7 179.6 74.5 180.8 83.7 182.0 83.9 183.2 49.0 184.3 84.3 185.5 75.7 186.7 69.3 187.8 59.5 189.0 67.4 190.2 75.4 191.3 53.4 192.5 89.2 193.7 54.7 194.9 71.7 196.0 72.0 197.2 71.5 198.4 102.0 199.5 85.0 200.7 90.4 201.9 60.3 203.1 86.3 204.2 78.2 205.4 61.5 206.6 69.2 207.7 49.0 208.9 98.0 210.1 67.3 211.3 95.8 212.4 67.6 213.6 53.8 214.8 66.6 215.9 101.6 217.1 49.0 218.3 88.0 219.4 87.5 220.6 49.0 221.8 73.4 223.0 64.9 224.1 77.8 225.3 97.4 226.5 77.5 227.6 86.9 228.8 84.6 230.0 102.0 231.2 87.0 232.3 102.0 233.5 99.9" stroke="#1a8fd0" stroke-opacity="0.38" stroke-width="1" stroke-linejoin="round" fill="none"/></svg>
<span class="t" style="left:764.50px;top:224.25px;font-size:38.5px;line-height:44.5px;color:#0ea1ea;letter-spacing:1.075px;-webkit-text-stroke:1.62px #0ea1ea;">3.63 MB/s</span>
<svg class="b" style="left:982px;top:133px;border-radius:7px;" width="234" height="206" viewBox="0 0 234 206" fill="none"><defs><linearGradient id="g14" x1="0" y1="40" x2="0" y2="174" gradientUnits="userSpaceOnUse"><stop offset="0" stop-color="#0c98de" stop-opacity="0.5"/><stop offset="0.45" stop-color="#0c98de" stop-opacity="0.48"/><stop offset="0.63" stop-color="#0c98de" stop-opacity="0.34"/><stop offset="0.75" stop-color="#0c98de" stop-opacity="0.17"/><stop offset="0.88" stop-color="#0c98de" stop-opacity="0.05"/><stop offset="1" stop-color="#0c98de" stop-opacity="0"/></linearGradient></defs><path d="M0.5 185L0.5 69.3 1.7 52.9 2.8 90.4 4.0 72.7 5.2 77.0 6.4 97.0 7.5 70.4 8.7 66.2 9.9 71.7 11.0 62.7 12.2 80.2 13.4 70.0 14.6 84.8 15.7 97.0 16.9 69.7 18.1 88.4 19.2 85.9 20.4 54.1 21.6 89.9 22.7 94.3 23.9 70.7 25.1 66.7 26.3 70.0 27.4 67.4 28.6 70.4 29.8 79.9 30.9 86.8 32.1 97.0 33.3 50.0 34.5 97.0 35.6 50.0 36.8 79.7 38.0 88.8 39.1 50.9 40.3 87.4 41.5 84.3 42.7 61.7 43.8 60.6 45.0 97.0 46.2 88.3 47.3 57.0 48.5 67.3 49.7 56.6 50.8 71.9 52.0 74.6 53.2 50.0 54.4 94.5 55.5 88.3 56.7 81.2 57.9 77.1 59.0 97.0 60.2 75.4 61.4 86.8 62.6 85.2 63.7 88.3 64.9 83.2 66.1 64.2 67.2 53.4 68.4 54.4 69.6 79.8 70.8 53.1 71.9 84.2 73.1 92.0 74.3 87.2 75.4 79.5 76.6 97.0 77.8 83.3 78.9 75.2 80.1 94.8 81.3 97.0 82.5 75.3 83.6 77.0 84.8 67.0 86.0 50.0 87.1 64.5 88.3 86.2 89.5 50.0 90.7 61.1 91.8 77.0 93.0 92.8 94.2 87.0 95.3 97.0 96.5 64.0 97.7 79.3 98.9 72.8 100.0 78.9 101.2 56.5 102.4 97.0 103.5 62.3 104.7 66.7 105.9 88.6 107.0 66.6 108.2 72.4 109.4 76.6 110.6 78.5 111.7 80.2 112.9 75.0 114.1 97.0 115.2 68.6 116.4 82.6 117.6 50.0 118.8 50.0 119.9 61.1 121.1 97.0 122.3 53.2 123.4 84.7 124.6 50.0 125.8 50.0 127.0 69.3 128.1 50.0 129.3 77.7 130.5 54.9 131.6 50.0 132.8 97.0 134.0 50.0 135.1 61.6 136.3 55.3 137.5 97.0 138.7 61.5 139.8 63.4 141.0 90.3 142.2 65.0 143.3 66.2 144.5 85.4 145.7 83.7 146.9 81.9 148.0 72.0 149.2 66.9 150.4 75.3 151.5 95.6 152.7 60.7 153.9 72.7 155.1 80.7 156.2 64.9 157.4 65.8 158.6 91.9 159.7 87.1 160.9 87.6 162.1 95.7 163.2 97.0 164.4 94.3 165.6 97.0 166.8 82.8 167.9 97.0 169.1 68.9 170.3 64.1 171.4 97.0 172.6 66.6 173.8 71.6 175.0 74.3 176.1 64.3 177.3 82.8 178.5 50.0 179.6 81.9 180.8 77.8 182.0 68.5 183.2 55.5 184.3 50.0 185.5 64.2 186.7 69.2 187.8 83.1 189.0 56.8 190.2 97.0 191.3 65.3 192.5 88.5 193.7 50.0 194.9 96.9 196.0 81.4 197.2 65.3 198.4 77.2 199.5 51.5 200.7 84.3 201.9 87.3 203.1 69.0 204.2 72.9 205.4 50.0 206.6 54.6 207.7 66.7 208.9 82.5 210.1 67.6 211.3 59.8 212.4 50.0 213.6 97.0 214.8 71.8 215.9 76.9 217.1 97.0 218.3 97.0 219.4 57.3 220.6 84.9 221.8 60.8 223.0 60.0 224.1 81.0 225.3 80.0 226.5 74.8 227.6 97.0 228.8 97.0 230.0 87.1 231.2 52.3 232.3 97.0 233.5 74.1L233.5 185Z" fill="url(#g14)"/><path d="M0.5 69.3 1.7 52.9 2.8 90.4 4.0 72.7 5.2 77.0 6.4 97.0 7.5 70.4 8.7 66.2 9.9 71.7 11.0 62.7 12.2 80.2 13.4 70.0 14.6 84.8 15.7 97.0 16.9 69.7 18.1 88.4 19.2 85.9 20.4 54.1 21.6 89.9 22.7 94.3 23.9 70.7 25.1 66.7 26.3 70.0 27.4 67.4 28.6 70.4 29.8 79.9 30.9 86.8 32.1 97.0 33.3 50.0 34.5 97.0 35.6 50.0 36.8 79.7 38.0 88.8 39.1 50.9 40.3 87.4 41.5 84.3 42.7 61.7 43.8 60.6 45.0 97.0 46.2 88.3 47.3 57.0 48.5 67.3 49.7 56.6 50.8 71.9 52.0 74.6 53.2 50.0 54.4 94.5 55.5 88.3 56.7 81.2 57.9 77.1 59.0 97.0 60.2 75.4 61.4 86.8 62.6 85.2 63.7 88.3 64.9 83.2 66.1 64.2 67.2 53.4 68.4 54.4 69.6 79.8 70.8 53.1 71.9 84.2 73.1 92.0 74.3 87.2 75.4 79.5 76.6 97.0 77.8 83.3 78.9 75.2 80.1 94.8 81.3 97.0 82.5 75.3 83.6 77.0 84.8 67.0 86.0 50.0 87.1 64.5 88.3 86.2 89.5 50.0 90.7 61.1 91.8 77.0 93.0 92.8 94.2 87.0 95.3 97.0 96.5 64.0 97.7 79.3 98.9 72.8 100.0 78.9 101.2 56.5 102.4 97.0 103.5 62.3 104.7 66.7 105.9 88.6 107.0 66.6 108.2 72.4 109.4 76.6 110.6 78.5 111.7 80.2 112.9 75.0 114.1 97.0 115.2 68.6 116.4 82.6 117.6 50.0 118.8 50.0 119.9 61.1 121.1 97.0 122.3 53.2 123.4 84.7 124.6 50.0 125.8 50.0 127.0 69.3 128.1 50.0 129.3 77.7 130.5 54.9 131.6 50.0 132.8 97.0 134.0 50.0 135.1 61.6 136.3 55.3 137.5 97.0 138.7 61.5 139.8 63.4 141.0 90.3 142.2 65.0 143.3 66.2 144.5 85.4 145.7 83.7 146.9 81.9 148.0 72.0 149.2 66.9 150.4 75.3 151.5 95.6 152.7 60.7 153.9 72.7 155.1 80.7 156.2 64.9 157.4 65.8 158.6 91.9 159.7 87.1 160.9 87.6 162.1 95.7 163.2 97.0 164.4 94.3 165.6 97.0 166.8 82.8 167.9 97.0 169.1 68.9 170.3 64.1 171.4 97.0 172.6 66.6 173.8 71.6 175.0 74.3 176.1 64.3 177.3 82.8 178.5 50.0 179.6 81.9 180.8 77.8 182.0 68.5 183.2 55.5 184.3 50.0 185.5 64.2 186.7 69.2 187.8 83.1 189.0 56.8 190.2 97.0 191.3 65.3 192.5 88.5 193.7 50.0 194.9 96.9 196.0 81.4 197.2 65.3 198.4 77.2 199.5 51.5 200.7 84.3 201.9 87.3 203.1 69.0 204.2 72.9 205.4 50.0 206.6 54.6 207.7 66.7 208.9 82.5 210.1 67.6 211.3 59.8 212.4 50.0 213.6 97.0 214.8 71.8 215.9 76.9 217.1 97.0 218.3 97.0 219.4 57.3 220.6 84.9 221.8 60.8 223.0 60.0 224.1 81.0 225.3 80.0 226.5 74.8 227.6 97.0 228.8 97.0 230.0 87.1 231.2 52.3 232.3 97.0 233.5 74.1" stroke="#1a8fd0" stroke-opacity="0.38" stroke-width="1" stroke-linejoin="round" fill="none"/></svg>
<span class="t" style="left:1006.75px;top:226.00px;font-size:35px;line-height:41px;color:#0ea1ea;letter-spacing:0.746px;-webkit-text-stroke:1.47px #0ea1ea;">56.43 MB/s</span>
<svg class="b" style="left:253px;top:384px;" width="314" height="206" viewBox="0 0 314 206" fill="none"><path d="M59.69999999999999 67.5H291.20000000000005" stroke="#2c3145" stroke-width="1"/><path d="M59.69999999999999 80.1H291.20000000000005" stroke="#2c3145" stroke-width="1"/><path d="M59.69999999999999 92.7H291.20000000000005" stroke="#2c3145" stroke-width="1"/><path d="M59.69999999999999 105.3H291.20000000000005" stroke="#2c3145" stroke-width="1"/><path d="M59.69999999999999 118.0H291.20000000000005" stroke="#2c3145" stroke-width="1"/><path d="M59.69999999999999 130.6H291.20000000000005" stroke="#2c3145" stroke-width="1"/><path d="M59.69999999999999 143.2H291.20000000000005" stroke="#2c3145" stroke-width="1"/><path d="M59.69999999999999 155.8H291.20000000000005" stroke="#2c3145" stroke-width="1"/><path d="M59.7 156.0V96.3H61.3V76.8H62.9V78.7H64.5V85.7H66.1V78.5H67.7V80.2H69.3V91.0H71.0V101.2H72.6V83.5H74.2V70.4H75.8V68.8H77.4V68.1H79.0V74.7H80.6V68.4H82.2V86.3H83.8V75.7H85.4V88.2H87.0V72.1H88.6V72.9H90.2V96.9H91.9V75.7H93.5V85.3H95.1V85.0H96.7V74.2H98.3V75.2H99.9V75.3H101.5V70.4H103.1V67.4H104.7V69.6H106.3V67.4H107.9V83.2H109.5V69.0H111.1V68.0H112.8V96.9H114.4V86.2H116.0V68.0H117.6V98.2H119.2V85.9H120.8V73.9H122.4V72.6H124.0V97.9H125.6V70.1H127.2V72.3H128.8V80.8H130.4V82.8H132.0V88.7H133.7V82.5H135.3V68.3H136.9V84.7H138.5V81.0H140.1V81.6H141.7V78.7H143.3V83.7H144.9V80.7H146.5V67.4H148.1V70.1H149.7V75.1H151.3V74.6H152.9V72.1H154.6V72.9H156.2V67.6H157.8V77.5H159.4V89.3H161.0V68.0H162.6V89.8H164.2V82.5H165.8V69.6H167.4V83.1H169.0V80.3H170.6V72.1H172.2V89.8H173.8V70.1H175.5V82.4H177.1V72.4H178.7V67.4H180.3V67.4H181.9V91.5H183.5V74.6H185.1V83.1H186.7V101.6H188.3V71.6H189.9V85.9H191.5V99.1H193.1V78.7H194.7V70.7H196.3V77.1H198.0V76.7H199.6V68.0H201.2V73.0H202.8V67.4H204.4V81.3H206.0V75.6H207.6V75.5H209.2V70.3H210.8V82.2H212.4V76.4H214.0V82.2H215.6V71.7H217.2V67.4H218.9V77.8H220.5V79.2H222.1V67.6H223.7V75.7H225.3V87.1H226.9V100.7H228.5V81.5H230.1V85.1H231.7V68.0H233.3V101.9H234.9V84.1H236.5V75.5H238.1V67.4H239.8V74.9H241.4V68.8H243.0V74.4H244.6V99.1H246.2V67.4H247.8V72.3H249.4V71.8H251.0V76.1H252.6V70.3H254.2V80.8H255.8V100.8H257.4V73.5H259.0V75.5H260.7V92.6H262.3V98.0H263.9V82.8H265.5V70.2H267.1V92.4H268.7V73.4H270.3V73.4H271.9V71.1H273.5V98.9H275.1V71.7H276.7V76.9H278.3V98.6H279.9V82.5H281.6V77.2H283.2V70.7H284.8V77.3H286.4V72.0H288.0V96.1H289.6V75.9H291.2V156.0Z" fill="#089de3"/><path d="M59.7 156.0V128.8H61.3V126.3H62.9V130.3H64.5V129.3H66.1V130.7H67.7V132.3H69.3V128.5H71.0V131.5H72.6V129.2H74.2V121.9H75.8V131.7H77.4V123.0H79.0V130.5H80.6V118.7H82.2V121.2H83.8V130.1H85.4V119.3H87.0V122.1H88.6V131.8H90.2V126.9H91.9V124.1H93.5V118.5H95.1V130.0H96.7V128.0H98.3V119.4H99.9V117.0H101.5V132.4H103.1V130.9H104.7V121.6H106.3V127.0H107.9V126.0H109.5V120.5H111.1V119.9H112.8V123.0H114.4V120.5H116.0V121.4H117.6V120.0H119.2V123.7H120.8V125.1H122.4V131.1H124.0V117.2H125.6V119.6H127.2V128.0H128.8V124.6H130.4V131.1H132.0V126.5H133.7V122.7H135.3V130.3H136.9V125.4H138.5V119.5H140.1V128.3H141.7V124.6H143.3V129.2H144.9V128.6H146.5V118.0H148.1V123.8H149.7V129.9H151.3V118.8H152.9V123.2H154.6V124.1H156.2V127.2H157.8V129.0H159.4V131.1H161.0V123.4H162.6V131.1H164.2V118.7H165.8V130.0H167.4V123.1H169.0V122.7H170.6V129.1H172.2V130.0H173.8V126.1H175.5V127.2H177.1V116.3H178.7V122.1H180.3V126.4H181.9V124.8H183.5V124.4H185.1V130.2H186.7V133.4H188.3V118.6H189.9V118.5H191.5V129.9H193.1V124.7H194.7V121.4H196.3V118.4H198.0V133.0H199.6V131.3H201.2V127.9H202.8V125.3H204.4V131.3H206.0V121.0H207.6V122.9H209.2V125.4H210.8V118.7H212.4V127.5H214.0V118.8H215.6V126.6H217.2V127.6H218.9V127.2H220.5V121.6H222.1V119.4H223.7V132.3H225.3V124.6H226.9V119.2H228.5V122.4H230.1V130.3H231.7V127.9H233.3V120.2H234.9V128.8H236.5V116.6H238.1V128.4H239.8V124.4H241.4V123.7H243.0V123.9H244.6V123.7H246.2V119.2H247.8V123.4H249.4V119.2H251.0V123.0H252.6V124.1H254.2V131.9H255.8V117.8H257.4V130.1H259.0V130.0H260.7V133.0H262.3V122.5H263.9V127.0H265.5V121.2H267.1V120.1H268.7V116.3H270.3V119.5H271.9V121.5H273.5V125.5H275.1V131.5H276.7V121.5H278.3V117.3H279.9V127.0H281.6V117.6H283.2V124.7H284.8V127.3H286.4V119.8H288.0V130.7H289.6V127.0H291.2V156.0Z" fill="#6ec5c2"/><path d="M59.7 156.0V136.5H61.3V137.2H62.9V135.8H64.5V137.9H66.1V136.2H67.7V137.4H69.3V136.4H71.0V137.4H72.6V137.4H74.2V137.1H75.8V137.0H77.4V136.1H79.0V136.6H80.6V134.9H82.2V136.3H83.8V137.0H85.4V136.5H87.0V136.9H88.6V137.4H90.2V136.5H91.9V138.6H93.5V137.1H95.1V136.5H96.7V135.4H98.3V135.2H99.9V136.4H101.5V138.1H103.1V136.6H104.7V137.0H106.3V135.3H107.9V135.3H109.5V138.3H111.1V135.2H112.8V136.8H114.4V138.1H116.0V136.5H117.6V136.4H119.2V137.1H120.8V137.6H122.4V136.5H124.0V135.6H125.6V138.0H127.2V136.8H128.8V137.7H130.4V136.2H132.0V137.6H133.7V135.8H135.3V138.3H136.9V135.1H138.5V136.4H140.1V134.5H141.7V135.0H143.3V134.8H144.9V137.9H146.5V135.8H148.1V136.8H149.7V135.0H151.3V136.2H152.9V136.9H154.6V135.5H156.2V135.1H157.8V137.1H159.4V137.7H161.0V136.5H162.6V136.4H164.2V137.8H165.8V135.8H167.4V136.2H169.0V135.0H170.6V138.1H172.2V137.8H173.8V136.2H175.5V135.7H177.1V135.9H178.7V135.6H180.3V137.7H181.9V138.6H183.5V135.4H185.1V136.4H186.7V138.5H188.3V138.2H189.9V135.6H191.5V135.6H193.1V137.6H194.7V137.4H196.3V136.5H198.0V138.4H199.6V137.4H201.2V137.3H202.8V138.0H204.4V136.9H206.0V135.4H207.6V138.4H209.2V135.6H210.8V135.9H212.4V136.8H214.0V135.7H215.6V135.8H217.2V137.1H218.9V136.4H220.5V136.2H222.1V137.2H223.7V137.8H225.3V137.1H226.9V136.1H228.5V136.7H230.1V137.5H231.7V136.9H233.3V138.1H234.9V135.8H236.5V135.8H238.1V137.7H239.8V135.8H241.4V138.3H243.0V138.0H244.6V136.2H246.2V136.8H247.8V136.8H249.4V137.7H251.0V136.6H252.6V136.6H254.2V137.3H255.8V136.1H257.4V137.3H259.0V137.1H260.7V138.3H262.3V135.6H263.9V136.0H265.5V134.9H267.1V136.6H268.7V135.4H270.3V135.9H271.9V138.5H273.5V134.7H275.1V136.9H276.7V137.2H278.3V137.3H279.9V137.4H281.6V135.8H283.2V136.8H284.8V136.6H286.4V136.7H288.0V136.1H289.6V135.9H291.2V156.0Z" fill="#10b27a"/><path d="M59.7 156.0V154.4H61.3V154.3H62.9V154.0H64.5V153.7H66.1V154.3H67.7V154.3H69.3V154.2H71.0V153.7H72.6V154.3H74.2V153.7H75.8V153.8H77.4V154.3H79.0V153.9H80.6V154.0H82.2V154.0H83.8V153.4H85.4V154.3H87.0V154.4H88.6V153.5H90.2V154.0H91.9V154.2H93.5V154.1H95.1V154.1H96.7V153.5H98.3V154.2H99.9V154.2H101.5V153.8H103.1V153.9H104.7V153.5H106.3V153.6H107.9V154.1H109.5V154.2H111.1V153.6H112.8V153.4H114.4V154.4H116.0V153.7H117.6V153.6H119.2V153.8H120.8V154.2H122.4V153.6H124.0V153.7H125.6V154.2H127.2V153.8H128.8V154.2H130.4V154.4H132.0V154.1H133.7V154.1H135.3V154.0H136.9V153.8H138.5V153.6H140.1V153.5H141.7V153.5H143.3V153.4H144.9V153.6H146.5V154.1H148.1V154.3H149.7V153.8H151.3V153.9H152.9V153.8H154.6V154.3H156.2V154.2H157.8V153.5H159.4V153.8H161.0V153.7H162.6V154.3H164.2V154.0H165.8V153.5H167.4V153.8H169.0V153.4H170.6V154.2H172.2V154.0H173.8V153.6H175.5V154.0H177.1V153.6H178.7V153.9H180.3V154.3H181.9V154.3H183.5V153.4H185.1V154.3H186.7V154.2H188.3V154.1H189.9V153.7H191.5V153.6H193.1V154.0H194.7V153.9H196.3V153.6H198.0V154.2H199.6V154.1H201.2V153.8H202.8V153.8H204.4V154.4H206.0V154.3H207.6V154.3H209.2V153.7H210.8V153.7H212.4V153.5H214.0V153.7H215.6V154.2H217.2V153.7H218.9V153.4H220.5V154.1H222.1V154.4H223.7V154.1H225.3V154.2H226.9V154.3H228.5V154.4H230.1V154.3H231.7V153.6H233.3V154.4H234.9V153.8H236.5V154.2H238.1V154.2H239.8V153.6H241.4V154.1H243.0V154.3H244.6V154.0H246.2V153.7H247.8V153.9H249.4V153.6H251.0V154.0H252.6V153.9H254.2V153.7H255.8V154.0H257.4V153.7H259.0V154.0H260.7V154.3H262.3V154.3H263.9V153.6H265.5V153.7H267.1V153.5H268.7V153.7H270.3V153.9H271.9V154.3H273.5V153.6H275.1V154.3H276.7V154.0H278.3V154.3H279.9V154.1H281.6V154.1H283.2V154.0H284.8V153.7H286.4V153.9H288.0V154.2H289.6V153.7H291.2V156.0Z" fill="#e4683d"/><path d="M290.9 71.0V121.7" stroke="#232839" stroke-width="0.9" stroke-dasharray="2 2"/></svg>
<span class="t" style="left:276.95px;top:445.30px;font-size:10.5px;line-height:12px;color:#a0a6bb;letter-spacing:-0.073px;">35 rps</span>
<span class="t" style="left:276.95px;top:457.91px;font-size:10.5px;line-height:12px;color:#a0a6bb;letter-spacing:-0.073px;">30 rps</span>
<span class="t" style="left:276.95px;top:470.53px;font-size:10.5px;line-height:12px;color:#a0a6bb;letter-spacing:-0.073px;">25 rps</span>
<span class="t" style="left:276.95px;top:483.14px;font-size:10.5px;line-height:12px;color:#a0a6bb;letter-spacing:-0.073px;">20 rps</span>
<span class="t" style="left:276.95px;top:495.76px;font-size:10.5px;line-height:12px;color:#a0a6bb;letter-spacing:-0.073px;">15 rps</span>
<span class="t" style="left:276.95px;top:508.37px;font-size:10.5px;line-height:12px;color:#a0a6bb;letter-spacing:-0.073px;">10 rps</span>
<span class="t" style="left:282.71px;top:520.99px;font-size:10.5px;line-height:12px;color:#a0a6bb;letter-spacing:-0.070px;">5 rps</span>
<span class="t" style="left:282.71px;top:533.60px;font-size:10.5px;line-height:12px;color:#a0a6bb;letter-spacing:-0.070px;">0 rps</span>
<span class="t" style="left:298.96px;top:545.60px;font-size:10.5px;line-height:12px;color:#a0a6bb;letter-spacing:-0.309px;">Apr 15</span>
<span class="t" style="left:375.96px;top:545.60px;font-size:10.5px;line-height:12px;color:#a0a6bb;letter-spacing:-0.309px;">Apr 16</span>
<span class="t" style="left:452.96px;top:545.60px;font-size:10.5px;line-height:12px;color:#a0a6bb;letter-spacing:-0.309px;">Apr 17</span>
<span class="t" style="left:499.94px;top:545.60px;font-size:10.5px;line-height:12px;color:#a0a6bb;letter-spacing:0.055px;">6:00:00pm</span>
<div class="b" style="left:274px;top:571.2px;width:7px;height:7px;background:#089de3;border-radius:1.5px;"></div>
<span class="t" style="left:285.50px;top:568.70px;font-size:10.5px;line-height:12px;color:#a0a6bb;letter-spacing:0.315px;">ReadObject</span>
<div class="b" style="left:353.6px;top:571.2px;width:7px;height:7px;background:#5bc3c4;border-radius:1.5px;"></div>
<span class="t" style="left:365.10px;top:568.70px;font-size:10.5px;line-height:12px;color:#a0a6bb;letter-spacing:0.486px;">WriteObject</span>
<span class="t" style="left:529.53px;top:568.70px;font-size:10.5px;line-height:12px;color:#a0a6bb;letter-spacing:0.000px;">+3</span>
<svg class="b" style="left:577px;top:384px;" width="314" height="206" viewBox="0 0 314 206" fill="none"><path d="M59 67.5H290.70000000000005" stroke="#2c3145" stroke-width="1"/><path d="M59 82.2H290.70000000000005" stroke="#2c3145" stroke-width="1"/><path d="M59 96.9H290.70000000000005" stroke="#2c3145" stroke-width="1"/><path d="M59 111.6H290.70000000000005" stroke="#2c3145" stroke-width="1"/><path d="M59 126.4H290.70000000000005" stroke="#2c3145" stroke-width="1"/><path d="M59 141.1H290.70000000000005" stroke="#2c3145" stroke-width="1"/><path d="M59 155.8H290.70000000000005" stroke="#2c3145" stroke-width="1"/><path d="M59.0 156.0V76.3H60.6V89.8H62.2V85.3H63.8V73.8H65.4V83.0H67.0V79.2H68.7V85.5H70.3V82.4H71.9V83.6H73.5V90.4H75.1V85.8H76.7V76.9H78.3V75.3H79.9V91.7H81.5V77.8H83.1V71.8H84.7V100.7H86.4V94.1H88.0V87.6H89.6V81.4H91.2V75.9H92.8V70.5H94.4V94.0H96.0V91.1H97.6V77.1H99.2V90.2H100.8V77.3H102.4V86.7H104.1V73.3H105.7V88.4H107.3V81.2H108.9V76.8H110.5V84.6H112.1V79.1H113.7V73.7H115.3V91.0H116.9V81.0H118.5V71.7H120.1V69.8H121.8V70.7H123.4V82.3H125.0V91.3H126.6V93.1H128.2V78.7H129.8V78.2H131.4V84.9H133.0V70.5H134.6V74.6H136.2V92.9H137.8V70.1H139.5V74.6H141.1V69.3H142.7V78.9H144.3V75.8H145.9V83.8H147.5V74.0H149.1V73.1H150.7V92.0H152.3V75.9H153.9V76.7H155.5V91.5H157.2V88.6H158.8V78.7H160.4V79.7H162.0V94.8H163.6V86.3H165.2V70.0H166.8V81.4H168.4V80.2H170.0V89.9H171.6V90.3H173.2V77.1H174.9V69.1H176.5V83.7H178.1V83.4H179.7V74.8H181.3V84.4H182.9V81.1H184.5V90.4H186.1V85.1H187.7V76.6H189.3V71.6H190.9V77.1H192.5V89.6H194.2V100.7H195.8V89.0H197.4V86.2H199.0V90.5H200.6V91.9H202.2V84.6H203.8V88.2H205.4V86.2H207.0V80.3H208.6V82.3H210.2V86.1H211.9V74.0H213.5V87.9H215.1V91.5H216.7V79.5H218.3V77.7H219.9V77.4H221.5V73.4H223.1V94.0H224.7V93.8H226.3V76.4H227.9V86.4H229.6V73.4H231.2V72.7H232.8V88.7H234.4V96.6H236.0V72.8H237.6V82.1H239.2V92.7H240.8V75.2H242.4V80.5H244.0V92.8H245.6V89.3H247.3V92.3H248.9V71.0H250.5V94.9H252.1V82.9H253.7V84.8H255.3V69.3H256.9V76.1H258.5V92.3H260.1V79.9H261.7V76.6H263.3V76.3H265.0V94.5H266.6V82.1H268.2V86.3H269.8V87.9H271.4V76.7H273.0V83.6H274.6V90.1H276.2V73.6H277.8V98.8H279.4V85.4H281.0V99.2H282.7V74.1H284.3V74.9H285.9V73.7H287.5V92.8H289.1V78.8H290.7V156.0Z" fill="#089de3"/><path d="M59.0 156.0V153.8H60.6V154.4H62.2V153.8H63.8V154.3H65.4V154.2H67.0V153.9H68.7V154.3H70.3V154.1H71.9V154.4H73.5V153.8H75.1V153.8H76.7V154.4H78.3V154.4H79.9V154.2H81.5V154.1H83.1V154.0H84.7V154.3H86.4V154.1H88.0V154.4H89.6V154.4H91.2V154.5H92.8V154.1H94.4V154.1H96.0V154.1H97.6V153.8H99.2V154.3H100.8V154.3H102.4V154.2H104.1V153.8H105.7V154.3H107.3V154.3H108.9V154.2H110.5V154.0H112.1V154.3H113.7V154.4H115.3V154.0H116.9V154.1H118.5V154.1H120.1V154.5H121.8V154.3H123.4V154.4H125.0V154.3H126.6V153.9H128.2V153.8H129.8V153.9H131.4V154.3H133.0V154.1H134.6V153.9H136.2V154.3H137.8V154.2H139.5V154.0H141.1V154.3H142.7V154.2H144.3V154.3H145.9V153.9H147.5V154.1H149.1V154.5H150.7V154.5H152.3V154.0H153.9V154.4H155.5V154.0H157.2V154.4H158.8V154.1H160.4V154.3H162.0V154.0H163.6V154.4H165.2V154.2H166.8V154.0H168.4V154.3H170.0V153.8H171.6V153.8H173.2V153.8H174.9V153.8H176.5V153.8H178.1V154.1H179.7V153.9H181.3V154.2H182.9V154.5H184.5V153.8H186.1V153.8H187.7V154.3H189.3V154.2H190.9V154.4H192.5V154.0H194.2V154.4H195.8V153.9H197.4V154.5H199.0V154.2H200.6V153.9H202.2V154.2H203.8V154.4H205.4V154.5H207.0V154.0H208.6V154.5H210.2V154.3H211.9V154.1H213.5V154.3H215.1V154.5H216.7V153.9H218.3V154.0H219.9V154.1H221.5V154.4H223.1V154.2H224.7V153.8H226.3V154.1H227.9V154.3H229.6V153.8H231.2V154.3H232.8V154.1H234.4V154.4H236.0V153.9H237.6V154.0H239.2V154.1H240.8V154.2H242.4V154.3H244.0V154.2H245.6V154.1H247.3V154.5H248.9V154.0H250.5V154.0H252.1V154.5H253.7V154.4H255.3V154.0H256.9V154.3H258.5V154.4H260.1V154.0H261.7V153.8H263.3V154.3H265.0V154.1H266.6V154.1H268.2V154.1H269.8V154.1H271.4V153.9H273.0V153.9H274.6V153.9H276.2V154.0H277.8V154.0H279.4V154.0H281.0V154.0H282.7V154.0H284.3V154.0H285.9V154.5H287.5V154.4H289.1V154.0H290.7V156.0Z" fill="#5bc3c4"/><path d="M290.4 71.0V121.7" stroke="#232839" stroke-width="0.9" stroke-dasharray="2 2"/></svg>
<span class="t" style="left:600.25px;top:445.30px;font-size:10.5px;line-height:12px;color:#a0a6bb;letter-spacing:-0.073px;">60 rps</span>
<span class="t" style="left:600.25px;top:460.02px;font-size:10.5px;line-height:12px;color:#a0a6bb;letter-spacing:-0.073px;">50 rps</span>
<span class="t" style="left:600.25px;top:474.73px;font-size:10.5px;line-height:12px;color:#a0a6bb;letter-spacing:-0.073px;">40 rps</span>
<span class="t" style="left:600.25px;top:489.45px;font-size:10.5px;line-height:12px;color:#a0a6bb;letter-spacing:-0.073px;">30 rps</span>
<span class="t" style="left:600.25px;top:504.17px;font-size:10.5px;line-height:12px;color:#a0a6bb;letter-spacing:-0.073px;">20 rps</span>
<span class="t" style="left:600.25px;top:518.88px;font-size:10.5px;line-height:12px;color:#a0a6bb;letter-spacing:-0.073px;">10 rps</span>
<span class="t" style="left:606.01px;top:533.60px;font-size:10.5px;line-height:12px;color:#a0a6bb;letter-spacing:-0.070px;">0 rps</span>
<span class="t" style="left:622.46px;top:545.60px;font-size:10.5px;line-height:12px;color:#a0a6bb;letter-spacing:-0.309px;">Apr 15</span>
<span class="t" style="left:699.46px;top:545.60px;font-size:10.5px;line-height:12px;color:#a0a6bb;letter-spacing:-0.309px;">Apr 16</span>
<span class="t" style="left:776.46px;top:545.60px;font-size:10.5px;line-height:12px;color:#a0a6bb;letter-spacing:-0.309px;">Apr 17</span>
<span class="t" style="left:823.44px;top:545.60px;font-size:10.5px;line-height:12px;color:#a0a6bb;letter-spacing:0.055px;">6:00:00pm</span>
<div class="b" style="left:598px;top:571.2px;width:7px;height:7px;background:#089de3;border-radius:1.5px;"></div>
<span class="t" style="left:609.50px;top:568.70px;font-size:10.5px;line-height:12px;color:#a0a6bb;letter-spacing:0.165px;">OK</span>
<div class="b" style="left:634.5px;top:571.2px;width:7px;height:7px;background:#5bc3c4;border-radius:1.5px;"></div>
<span class="t" style="left:646.00px;top:568.70px;font-size:10.5px;line-height:12px;color:#a0a6bb;letter-spacing:0.074px;">NOT_FOUND</span>
<svg class="b" style="left:901px;top:384px;" width="314" height="206" viewBox="0 0 314 206" fill="none"><path d="M59.700000000000045 67.5H290.70000000000005" stroke="#2c3145" stroke-width="1"/><path d="M59.700000000000045 85.2H290.70000000000005" stroke="#2c3145" stroke-width="1"/><path d="M59.700000000000045 102.8H290.70000000000005" stroke="#2c3145" stroke-width="1"/><path d="M59.700000000000045 120.5H290.70000000000005" stroke="#2c3145" stroke-width="1"/><path d="M59.700000000000045 138.1H290.70000000000005" stroke="#2c3145" stroke-width="1"/><path d="M59.700000000000045 155.8H290.70000000000005" stroke="#2c3145" stroke-width="1"/><path d="M59.7 156.0V90.9H61.3V76.5H62.9V77.3H64.5V75.9H66.1V92.7H67.7V93.8H69.3V72.9H70.9V86.7H72.5V89.3H74.1V89.7H75.7V79.5H77.3V89.1H79.0V81.1H80.6V75.5H82.2V79.0H83.8V95.3H85.4V76.4H87.0V89.6H88.6V73.5H90.2V83.4H91.8V73.8H93.4V81.1H95.0V79.9H96.6V76.4H98.2V87.2H99.8V81.7H101.4V74.7H103.0V82.6H104.6V75.6H106.2V79.0H107.8V74.9H109.4V77.6H111.0V82.0H112.6V80.5H114.2V78.5H115.8V90.4H117.5V77.8H119.1V93.7H120.7V88.9H122.3V79.6H123.9V76.9H125.5V100.3H127.1V89.6H128.7V77.5H130.3V84.8H131.9V84.5H133.5V79.7H135.1V82.8H136.7V77.9H138.3V75.9H139.9V93.8H141.5V88.2H143.1V91.0H144.7V91.5H146.3V72.9H147.9V81.4H149.5V85.9H151.1V89.6H152.7V88.1H154.3V89.2H156.0V73.2H157.6V72.2H159.2V87.9H160.8V89.7H162.4V84.8H164.0V87.6H165.6V73.1H167.2V81.0H168.8V95.2H170.4V87.0H172.0V79.5H173.6V75.4H175.2V78.5H176.8V77.4H178.4V97.7H180.0V85.7H181.6V90.9H183.2V95.5H184.8V77.9H186.4V90.1H188.0V83.5H189.6V90.5H191.2V81.2H192.8V79.5H194.5V91.1H196.1V80.4H197.7V86.9H199.3V80.5H200.9V84.7H202.5V77.8H204.1V98.6H205.7V94.7H207.3V92.0H208.9V79.5H210.5V80.8H212.1V91.0H213.7V80.4H215.3V72.8H216.9V85.0H218.5V92.0H220.1V75.0H221.7V73.5H223.3V73.5H224.9V77.1H226.5V100.9H228.1V82.1H229.7V91.4H231.3V93.6H233.0V82.0H234.6V93.8H236.2V74.8H237.8V94.4H239.4V72.6H241.0V97.9H242.6V88.6H244.2V95.1H245.8V74.2H247.4V86.9H249.0V74.2H250.6V73.1H252.2V92.5H253.8V76.6H255.4V73.1H257.0V92.7H258.6V89.3H260.2V78.7H261.8V96.1H263.4V90.4H265.0V98.1H266.6V98.3H268.2V84.0H269.8V89.6H271.5V87.7H273.1V87.1H274.7V72.8H276.3V94.5H277.9V74.7H279.5V78.8H281.1V85.7H282.7V79.7H284.3V76.4H285.9V96.5H287.5V94.1H289.1V72.1H290.7V156.0Z" fill="#089de3"/><path d="M59.7 156.0V134.6H61.3V137.1H62.9V136.7H64.5V138.0H66.1V139.9H67.7V138.0H69.3V139.4H70.9V139.8H72.5V139.5H74.1V140.7H75.7V136.7H77.3V139.8H79.0V136.3H80.6V137.9H82.2V134.7H83.8V136.1H85.4V135.4H87.0V136.2H88.6V135.5H90.2V134.5H91.8V134.2H93.4V139.5H95.0V138.4H96.6V138.5H98.2V139.1H99.8V135.5H101.4V134.6H103.0V140.4H104.6V139.4H106.2V134.6H107.8V140.0H109.4V140.2H111.0V134.7H112.6V138.6H114.2V140.9H115.8V136.6H117.5V139.3H119.1V137.8H120.7V138.2H122.3V135.2H123.9V134.5H125.5V134.4H127.1V137.1H128.7V134.5H130.3V135.9H131.9V136.8H133.5V136.2H135.1V136.1H136.7V134.6H138.3V138.8H139.9V134.6H141.5V135.0H143.1V136.4H144.7V137.0H146.3V138.4H147.9V134.4H149.5V137.6H151.1V140.4H152.7V134.2H154.3V136.3H156.0V137.4H157.6V140.9H159.2V137.6H160.8V134.4H162.4V134.5H164.0V139.7H165.6V138.4H167.2V134.2H168.8V135.8H170.4V136.8H172.0V139.7H173.6V136.3H175.2V140.6H176.8V140.6H178.4V135.8H180.0V140.2H181.6V134.2H183.2V139.0H184.8V140.5H186.4V138.1H188.0V138.6H189.6V134.5H191.2V137.6H192.8V138.2H194.5V136.9H196.1V138.5H197.7V140.9H199.3V140.7H200.9V136.0H202.5V136.9H204.1V141.1H205.7V134.2H207.3V136.8H208.9V137.2H210.5V138.2H212.1V134.4H213.7V138.0H215.3V141.1H216.9V134.9H218.5V136.5H220.1V134.6H221.7V138.4H223.3V134.2H224.9V140.6H226.5V138.5H228.1V139.6H229.7V137.5H231.3V135.2H233.0V137.2H234.6V137.2H236.2V136.2H237.8V139.3H239.4V134.2H241.0V139.6H242.6V137.5H244.2V135.7H245.8V135.4H247.4V139.6H249.0V137.3H250.6V137.2H252.2V137.6H253.8V139.3H255.4V136.0H257.0V137.2H258.6V137.8H260.2V135.9H261.8V137.5H263.4V137.2H265.0V137.7H266.6V135.4H268.2V138.9H269.8V141.2H271.5V138.1H273.1V138.1H274.7V140.7H276.3V136.5H277.9V136.9H279.5V139.1H281.1V136.7H282.7V139.3H284.3V136.1H285.9V139.0H287.5V135.9H289.1V138.8H290.7V156.0Z" fill="#5bc3c4"/><path d="M290.4 71.0V121.7" stroke="#232839" stroke-width="0.9" stroke-dasharray="2 2"/></svg>
<span class="t" style="left:924.95px;top:445.30px;font-size:10.5px;line-height:12px;color:#a0a6bb;letter-spacing:-0.073px;">50 rps</span>
<span class="t" style="left:924.95px;top:462.96px;font-size:10.5px;line-height:12px;color:#a0a6bb;letter-spacing:-0.073px;">40 rps</span>
<span class="t" style="left:924.95px;top:480.62px;font-size:10.5px;line-height:12px;color:#a0a6bb;letter-spacing:-0.073px;">30 rps</span>
<span class="t" style="left:924.95px;top:498.28px;font-size:10.5px;line-height:12px;color:#a0a6bb;letter-spacing:-0.073px;">20 rps</span>
<span class="t" style="left:924.95px;top:515.94px;font-size:10.5px;line-height:12px;color:#a0a6bb;letter-spacing:-0.073px;">10 rps</span>
<span class="t" style="left:930.71px;top:533.60px;font-size:10.5px;line-height:12px;color:#a0a6bb;letter-spacing:-0.070px;">0 rps</span>
<span class="t" style="left:946.96px;top:545.60px;font-size:10.5px;line-height:12px;color:#a0a6bb;letter-spacing:-0.309px;">Apr 15</span>
<span class="t" style="left:1023.96px;top:545.60px;font-size:10.5px;line-height:12px;color:#a0a6bb;letter-spacing:-0.309px;">Apr 16</span>
<span class="t" style="left:1100.96px;top:545.60px;font-size:10.5px;line-height:12px;color:#a0a6bb;letter-spacing:-0.309px;">Apr 17</span>
<span class="t" style="left:1147.94px;top:545.60px;font-size:10.5px;line-height:12px;color:#a0a6bb;letter-spacing:0.055px;">6:00:00pm</span>
<div class="b" style="left:922px;top:571.2px;width:7px;height:7px;background:#089de3;border-radius:1.5px;"></div>
<span class="t" style="left:933.50px;top:568.70px;font-size:10.5px;line-height:12px;color:#a0a6bb;letter-spacing:0.743px;">project-91b9dd59-418f-4993-8f5-test-bucke</span>
<span class="t" style="left:1177.53px;top:568.70px;font-size:10.5px;line-height:12px;color:#a0a6bb;letter-spacing:0.000px;">+1</span>
<svg class="b" style="left:253px;top:599px;" width="314" height="206" viewBox="0 0 314 206" fill="none"><path d="M63 67.5H291.20000000000005" stroke="#2c3145" stroke-width="1"/><path d="M63 89.6H291.20000000000005" stroke="#2c3145" stroke-width="1"/><path d="M63 111.6H291.20000000000005" stroke="#2c3145" stroke-width="1"/><path d="M63 133.7H291.20000000000005" stroke="#2c3145" stroke-width="1"/><path d="M63 155.8H291.20000000000005" stroke="#2c3145" stroke-width="1"/><path d="M63.0 156.0V95.8H64.3V75.5H65.6V108.3H66.9V97.2H68.2V92.2H69.5V70.4H70.8V94.2H72.1V83.0H73.4V106.6H74.7V103.3H76.0V78.5H77.3V84.8H78.6V77.6H80.0V89.8H81.3V87.6H82.6V101.7H83.9V100.5H85.2V110.7H86.5V103.5H87.8V89.4H89.1V83.1H90.4V76.9H91.7V80.9H93.0V73.7H94.3V76.9H95.6V112.4H96.9V70.7H98.2V87.3H99.5V90.1H100.8V108.3H102.1V104.3H103.4V109.7H104.7V108.0H106.0V74.8H107.3V93.0H108.6V75.2H109.9V67.4H111.2V81.7H112.6V101.4H113.9V104.0H115.2V67.7H116.5V87.5H117.8V94.8H119.1V68.0H120.4V103.4H121.7V71.1H123.0V114.0H124.3V90.0H125.6V94.8H126.9V67.4H128.2V89.2H129.5V84.1H130.8V74.0H132.1V81.5H133.4V73.0H134.7V73.6H136.0V109.6H137.3V105.2H138.6V91.4H139.9V92.0H141.2V73.6H142.5V105.0H143.8V67.4H145.2V73.8H146.5V80.5H147.8V98.6H149.1V75.0H150.4V78.2H151.7V71.7H153.0V96.4H154.3V74.8H155.6V101.5H156.9V89.2H158.2V105.2H159.5V98.5H160.8V68.4H162.1V67.4H163.4V104.2H164.7V80.6H166.0V114.6H167.3V93.6H168.6V89.9H169.9V100.1H171.2V111.2H172.5V79.7H173.8V70.3H175.1V101.7H176.4V93.1H177.8V76.6H179.1V77.8H180.4V78.4H181.7V95.7H183.0V68.3H184.3V74.5H185.6V74.0H186.9V81.5H188.2V103.2H189.5V68.4H190.8V83.0H192.1V87.2H193.4V79.3H194.7V75.4H196.0V104.0H197.3V102.8H198.6V94.0H199.9V105.4H201.2V78.3H202.5V104.7H203.8V81.8H205.1V81.9H206.4V76.4H207.7V74.7H209.0V85.9H210.4V102.6H211.7V70.3H213.0V81.6H214.3V87.0H215.6V71.5H216.9V73.7H218.2V83.1H219.5V92.1H220.8V101.3H222.1V109.7H223.4V106.8H224.7V112.8H226.0V79.4H227.3V105.6H228.6V78.6H229.9V97.7H231.2V101.9H232.5V67.9H233.8V93.2H235.1V106.9H236.4V80.6H237.7V80.3H239.0V68.4H240.3V74.6H241.6V92.4H243.0V83.3H244.3V103.1H245.6V94.7H246.9V88.6H248.2V99.8H249.5V72.9H250.8V74.9H252.1V92.5H253.4V73.7H254.7V91.1H256.0V102.6H257.3V99.0H258.6V106.3H259.9V78.1H261.2V96.2H262.5V109.9H263.8V109.7H265.1V88.5H266.4V71.3H267.7V99.8H269.0V73.7H270.3V74.4H271.6V108.7H272.9V96.9H274.2V69.9H275.6V76.1H276.9V81.1H278.2V113.1H279.5V99.3H280.8V77.7H282.1V105.0H283.4V101.4H284.7V109.0H286.0V86.6H287.3V101.8H288.6V73.8H289.9V108.6H291.2V156.0Z" fill="#089de3"/><path d="M63.0 156.0V106.7H64.3V114.9H65.6V125.4H66.9V106.6H68.2V118.1H69.5V109.9H70.8V132.7H72.1V125.8H73.4V106.6H74.7V109.4H76.0V133.6H77.3V116.7H78.6V117.8H80.0V123.5H81.3V128.5H82.6V120.8H83.9V126.7H85.2V124.8H86.5V108.5H87.8V119.7H89.1V121.4H90.4V118.5H91.7V128.3H93.0V107.8H94.3V115.7H95.6V112.4H96.9V106.2H98.2V128.0H99.5V114.5H100.8V116.5H102.1V110.3H103.4V113.6H104.7V117.4H106.0V127.2H107.3V115.3H108.6V109.8H109.9V106.9H111.2V117.1H112.6V115.7H113.9V109.7H115.2V117.3H116.5V118.4H117.8V110.9H119.1V108.1H120.4V110.3H121.7V107.3H123.0V125.5H124.3V115.3H125.6V130.7H126.9V107.1H128.2V123.3H129.5V115.4H130.8V111.8H132.1V116.7H133.4V116.7H134.7V116.7H136.0V114.2H137.3V112.9H138.6V111.1H139.9V116.8H141.2V118.5H142.5V126.1H143.8V133.6H145.2V120.9H146.5V106.8H147.8V116.7H149.1V126.2H150.4V116.6H151.7V111.0H153.0V109.1H154.3V119.4H155.6V113.6H156.9V131.0H158.2V109.0H159.5V118.7H160.8V128.0H162.1V124.3H163.4V109.4H164.7V108.0H166.0V124.5H167.3V106.6H168.6V123.7H169.9V130.1H171.2V132.7H172.5V125.9H173.8V111.3H175.1V114.4H176.4V107.5H177.8V124.2H179.1V125.7H180.4V108.6H181.7V116.5H183.0V116.7H184.3V110.4H185.6V136.6H186.9V131.2H188.2V129.2H189.5V119.7H190.8V129.0H192.1V115.3H193.4V118.0H194.7V119.6H196.0V122.6H197.3V117.6H198.6V110.4H199.9V106.8H201.2V106.4H202.5V134.1H203.8V113.1H205.1V110.9H206.4V107.3H207.7V114.9H209.0V123.2H210.4V117.4H211.7V106.9H213.0V127.0H214.3V115.8H215.6V119.3H216.9V120.5H218.2V129.7H219.5V117.2H220.8V114.1H222.1V109.7H223.4V106.8H224.7V120.9H226.0V121.7H227.3V126.7H228.6V115.5H229.9V110.0H231.2V112.6H232.5V117.3H233.8V106.8H235.1V106.9H236.4V107.8H237.7V120.3H239.0V111.7H240.3V131.7H241.6V113.1H243.0V122.4H244.3V115.7H245.6V106.1H246.9V121.5H248.2V122.3H249.5V112.2H250.8V127.3H252.1V122.1H253.4V109.4H254.7V127.7H256.0V110.2H257.3V118.0H258.6V118.0H259.9V107.7H261.2V117.9H262.5V130.4H263.8V114.2H265.1V117.8H266.4V109.7H267.7V115.4H269.0V110.1H270.3V111.0H271.6V112.6H272.9V109.1H274.2V112.3H275.6V128.8H276.9V126.2H278.2V129.1H279.5V115.9H280.8V106.9H282.1V123.3H283.4V128.9H284.7V125.0H286.0V113.5H287.3V108.4H288.6V108.4H289.9V129.8H291.2V156.0Z" fill="#5bc3c4"/><path d="M290.9 71.0V121.7" stroke="#232839" stroke-width="0.9" stroke-dasharray="2 2"/></svg>
<span class="t" style="left:276.81px;top:660.30px;font-size:10.5px;line-height:12px;color:#a0a6bb;letter-spacing:-0.082px;">24 rpm</span>
<span class="t" style="left:276.81px;top:682.38px;font-size:10.5px;line-height:12px;color:#a0a6bb;letter-spacing:-0.082px;">18 rpm</span>
<span class="t" style="left:276.81px;top:704.45px;font-size:10.5px;line-height:12px;color:#a0a6bb;letter-spacing:-0.082px;">12 rpm</span>
<span class="t" style="left:282.56px;top:726.52px;font-size:10.5px;line-height:12px;color:#a0a6bb;letter-spacing:-0.081px;">6 rpm</span>
<span class="t" style="left:282.56px;top:748.60px;font-size:10.5px;line-height:12px;color:#a0a6bb;letter-spacing:-0.081px;">0 rpm</span>
<span class="t" style="left:301.96px;top:760.60px;font-size:10.5px;line-height:12px;color:#a0a6bb;letter-spacing:-0.309px;">Apr 15</span>
<span class="t" style="left:377.96px;top:760.60px;font-size:10.5px;line-height:12px;color:#a0a6bb;letter-spacing:-0.309px;">Apr 16</span>
<span class="t" style="left:453.96px;top:760.60px;font-size:10.5px;line-height:12px;color:#a0a6bb;letter-spacing:-0.309px;">Apr 17</span>
<span class="t" style="left:499.94px;top:760.60px;font-size:10.5px;line-height:12px;color:#a0a6bb;letter-spacing:0.055px;">6:00:00pm</span>
<div class="b" style="left:274px;top:786.2px;width:7px;height:7px;background:#089de3;border-radius:1.5px;"></div>
<span class="t" style="left:285.50px;top:783.70px;font-size:10.5px;line-height:12px;color:#a0a6bb;letter-spacing:0.556px;">GetObjectMetadata</span>
<div class="b" style="left:395.5px;top:786.2px;width:7px;height:7px;background:#5bc3c4;border-radius:1.5px;"></div>
<span class="t" style="left:407.00px;top:783.70px;font-size:10.5px;line-height:12px;color:#a0a6bb;letter-spacing:0.405px;">ReadObject</span>
<svg class="b" style="left:577px;top:599px;" width="314" height="206" viewBox="0 0 314 206" fill="none"><path d="M62.5 67.5H290.70000000000005" stroke="#2c3145" stroke-width="1"/><path d="M62.5 89.6H290.70000000000005" stroke="#2c3145" stroke-width="1"/><path d="M62.5 111.6H290.70000000000005" stroke="#2c3145" stroke-width="1"/><path d="M62.5 133.7H290.70000000000005" stroke="#2c3145" stroke-width="1"/><path d="M62.5 155.8H290.70000000000005" stroke="#2c3145" stroke-width="1"/><path d="M62.5 156.0V110.5H63.8V70.1H65.1V101.5H66.4V101.6H67.7V87.1H69.0V82.2H70.3V67.4H71.6V96.8H72.9V89.0H74.2V102.6H75.5V90.7H76.8V95.7H78.1V69.9H79.5V109.9H80.8V83.7H82.1V80.6H83.4V75.5H84.7V97.8H86.0V104.7H87.3V88.9H88.6V67.4H89.9V71.4H91.2V69.7H92.5V68.1H93.8V77.0H95.1V87.0H96.4V68.1H97.7V81.7H99.0V89.5H100.3V98.9H101.6V84.4H102.9V68.7H104.2V91.6H105.5V76.6H106.8V99.3H108.1V98.3H109.4V102.4H110.7V73.6H112.1V78.8H113.4V94.0H114.7V72.0H116.0V79.4H117.3V81.8H118.6V112.5H119.9V74.7H121.2V67.9H122.5V108.6H123.8V100.4H125.1V81.0H126.4V78.7H127.7V70.8H129.0V82.6H130.3V87.8H131.6V70.6H132.9V87.2H134.2V77.9H135.5V99.1H136.8V76.5H138.1V82.7H139.4V92.7H140.7V91.2H142.0V74.5H143.3V72.3H144.7V83.2H146.0V89.2H147.3V102.9H148.6V74.0H149.9V91.8H151.2V67.4H152.5V67.4H153.8V103.2H155.1V83.0H156.4V84.7H157.7V69.1H159.0V71.3H160.3V100.4H161.6V77.8H162.9V103.9H164.2V83.3H165.5V70.4H166.8V98.5H168.1V88.7H169.4V91.1H170.7V76.1H172.0V67.8H173.3V110.0H174.6V77.8H175.9V79.6H177.3V104.2H178.6V86.6H179.9V69.9H181.2V73.4H182.5V103.3H183.8V91.3H185.1V107.3H186.4V75.8H187.7V87.0H189.0V67.4H190.3V90.2H191.6V69.3H192.9V113.4H194.2V67.7H195.5V103.0H196.8V69.8H198.1V81.9H199.4V75.9H200.7V95.1H202.0V84.1H203.3V97.0H204.6V71.6H205.9V109.0H207.2V87.7H208.5V89.9H209.9V84.9H211.2V100.9H212.5V69.8H213.8V67.4H215.1V80.7H216.4V103.3H217.7V95.0H219.0V94.9H220.3V95.0H221.6V92.6H222.9V74.1H224.2V94.7H225.5V82.9H226.8V71.8H228.1V81.7H229.4V74.4H230.7V84.5H232.0V68.8H233.3V70.3H234.6V90.1H235.9V91.8H237.2V78.1H238.5V78.9H239.8V91.8H241.1V87.5H242.5V88.1H243.8V76.0H245.1V81.5H246.4V71.4H247.7V75.9H249.0V82.9H250.3V92.2H251.6V85.1H252.9V92.6H254.2V67.5H255.5V103.3H256.8V67.4H258.1V67.4H259.4V86.3H260.7V103.4H262.0V104.4H263.3V88.9H264.6V113.8H265.9V67.6H267.2V83.7H268.5V89.4H269.8V81.2H271.1V81.1H272.4V87.2H273.7V67.5H275.1V81.7H276.4V94.2H277.7V103.1H279.0V92.6H280.3V80.9H281.6V92.0H282.9V95.3H284.2V88.0H285.5V97.0H286.8V74.5H288.1V93.4H289.4V95.8H290.7V156.0Z" fill="#089de3"/><path d="M62.5 156.0V114.2H63.8V115.1H65.1V107.9H66.4V106.3H67.7V110.2H69.0V118.1H70.3V115.2H71.6V109.5H72.9V114.2H74.2V122.0H75.5V124.8H76.8V106.6H78.1V130.6H79.5V133.4H80.8V115.4H82.1V125.3H83.4V123.2H84.7V113.0H86.0V110.3H87.3V115.5H88.6V106.7H89.9V114.0H91.2V120.2H92.5V111.2H93.8V124.2H95.1V115.8H96.4V113.0H97.7V127.8H99.0V117.7H100.3V108.9H101.6V114.2H102.9V107.5H104.2V121.7H105.5V113.0H106.8V117.4H108.1V131.3H109.4V113.3H110.7V116.3H112.1V132.7H113.4V126.7H114.7V115.4H116.0V107.9H117.3V123.6H118.6V120.4H119.9V116.4H121.2V119.0H122.5V108.6H123.8V117.0H125.1V114.0H126.4V124.4H127.7V117.8H129.0V111.5H130.3V121.1H131.6V112.9H132.9V113.8H134.2V130.7H135.5V113.9H136.8V112.2H138.1V123.4H139.4V133.5H140.7V127.2H142.0V130.4H143.3V118.6H144.7V113.8H146.0V118.8H147.3V134.5H148.6V116.1H149.9V122.6H151.2V120.3H152.5V123.7H153.8V117.3H155.1V117.2H156.4V133.9H157.7V108.0H159.0V136.2H160.3V112.5H161.6V120.2H162.9V111.4H164.2V117.0H165.5V121.1H166.8V114.2H168.1V106.8H169.4V109.9H170.7V115.3H172.0V113.4H173.3V110.4H174.6V115.2H175.9V124.4H177.3V132.5H178.6V115.9H179.9V118.3H181.2V116.4H182.5V109.2H183.8V117.4H185.1V120.9H186.4V119.4H187.7V106.5H189.0V118.9H190.3V107.0H191.6V117.9H192.9V125.8H194.2V117.4H195.5V117.7H196.8V107.4H198.1V111.4H199.4V115.9H200.7V108.0H202.0V131.5H203.3V109.1H204.6V121.1H205.9V109.0H207.2V111.0H208.5V109.2H209.9V108.9H211.2V110.2H212.5V108.3H213.8V106.8H215.1V108.5H216.4V129.1H217.7V108.8H219.0V108.2H220.3V107.8H221.6V112.2H222.9V109.0H224.2V121.5H225.5V116.4H226.8V117.6H228.1V121.0H229.4V122.6H230.7V125.5H232.0V110.6H233.3V123.0H234.6V119.4H235.9V114.1H237.2V113.4H238.5V107.2H239.8V109.1H241.1V110.6H242.5V127.8H243.8V111.3H245.1V113.3H246.4V107.2H247.7V129.2H249.0V108.3H250.3V107.4H251.6V134.0H252.9V123.1H254.2V121.4H255.5V134.3H256.8V134.3H258.1V114.0H259.4V116.6H260.7V109.2H262.0V117.4H263.3V114.3H264.6V119.7H265.9V111.2H267.2V129.5H268.5V118.9H269.8V118.0H271.1V118.5H272.4V122.2H273.7V111.2H275.1V110.1H276.4V125.3H277.7V118.2H279.0V121.1H280.3V106.8H281.6V116.7H282.9V128.6H284.2V113.9H285.5V112.1H286.8V120.0H288.1V128.4H289.4V106.1H290.7V156.0Z" fill="#5bc3c4"/><path d="M290.4 71.0V121.7" stroke="#232839" stroke-width="0.9" stroke-dasharray="2 2"/></svg>
<span class="t" style="left:600.31px;top:660.30px;font-size:10.5px;line-height:12px;color:#a0a6bb;letter-spacing:-0.082px;">24 rpm</span>
<span class="t" style="left:600.31px;top:682.38px;font-size:10.5px;line-height:12px;color:#a0a6bb;letter-spacing:-0.082px;">18 rpm</span>
<span class="t" style="left:600.31px;top:704.45px;font-size:10.5px;line-height:12px;color:#a0a6bb;letter-spacing:-0.082px;">12 rpm</span>
<span class="t" style="left:606.06px;top:726.52px;font-size:10.5px;line-height:12px;color:#a0a6bb;letter-spacing:-0.081px;">6 rpm</span>
<span class="t" style="left:606.06px;top:748.60px;font-size:10.5px;line-height:12px;color:#a0a6bb;letter-spacing:-0.081px;">0 rpm</span>
<span class="t" style="left:625.46px;top:760.60px;font-size:10.5px;line-height:12px;color:#a0a6bb;letter-spacing:-0.309px;">Apr 15</span>
<span class="t" style="left:701.46px;top:760.60px;font-size:10.5px;line-height:12px;color:#a0a6bb;letter-spacing:-0.309px;">Apr 16</span>
<span class="t" style="left:777.46px;top:760.60px;font-size:10.5px;line-height:12px;color:#a0a6bb;letter-spacing:-0.309px;">Apr 17</span>
<span class="t" style="left:823.44px;top:760.60px;font-size:10.5px;line-height:12px;color:#a0a6bb;letter-spacing:0.055px;">6:00:00pm</span>
<div class="b" style="left:598px;top:786.2px;width:7px;height:7px;background:#089de3;border-radius:1.5px;"></div>
<span class="t" style="left:609.50px;top:783.70px;font-size:10.5px;line-height:12px;color:#a0a6bb;letter-spacing:0.743px;">project-91b9dd59-418f-4993-8f5-test-bucke</span>
<span class="t" style="left:853.53px;top:783.70px;font-size:10.5px;line-height:12px;color:#a0a6bb;letter-spacing:0.000px;">+1</span>
<svg class="b" style="left:901px;top:599px;" width="314" height="206" viewBox="0 0 314 206" fill="none"><path d="M54.299999999999955 67.5H290.70000000000005" stroke="#2c3145" stroke-width="1"/><path d="M54.299999999999955 89.7H290.70000000000005" stroke="#2c3145" stroke-width="1"/><path d="M54.299999999999955 111.9H290.70000000000005" stroke="#2c3145" stroke-width="1"/><path d="M54.299999999999955 134.1H290.70000000000005" stroke="#2c3145" stroke-width="1"/><path d="M54.299999999999955 156.3H290.70000000000005" stroke="#2c3145" stroke-width="1"/><path d="M54.299999999999955 178.5H290.70000000000005" stroke="#2c3145" stroke-width="1"/></svg>
<span class="t" style="left:921.85px;top:660.30px;font-size:10.5px;line-height:12px;color:#a0a6bb;letter-spacing:-0.101px;">100%</span>
<span class="t" style="left:927.60px;top:682.50px;font-size:10.5px;line-height:12px;color:#a0a6bb;letter-spacing:-0.105px;">80%</span>
<span class="t" style="left:927.60px;top:704.70px;font-size:10.5px;line-height:12px;color:#a0a6bb;letter-spacing:-0.105px;">60%</span>
<span class="t" style="left:927.60px;top:726.90px;font-size:10.5px;line-height:12px;color:#a0a6bb;letter-spacing:-0.105px;">40%</span>
<span class="t" style="left:927.60px;top:749.10px;font-size:10.5px;line-height:12px;color:#a0a6bb;letter-spacing:-0.105px;">20%</span>
<span class="t" style="left:933.35px;top:771.30px;font-size:10.5px;line-height:12px;color:#a0a6bb;letter-spacing:-0.114px;">0%</span>
<span class="t" style="left:941.96px;top:783.30px;font-size:10.5px;line-height:12px;color:#a0a6bb;letter-spacing:-0.309px;">Apr 15</span>
<span class="t" style="left:1020.46px;top:783.30px;font-size:10.5px;line-height:12px;color:#a0a6bb;letter-spacing:-0.309px;">Apr 16</span>
<span class="t" style="left:1098.96px;top:783.30px;font-size:10.5px;line-height:12px;color:#a0a6bb;letter-spacing:-0.309px;">Apr 17</span>
<span class="t" style="left:1147.44px;top:783.30px;font-size:10.5px;line-height:12px;color:#a0a6bb;letter-spacing:0.055px;">6:00:00pm</span>
<svg class="b" style="left:955px;top:775px;" width="237" height="4" viewBox="0 0 237 4" fill="none"><path d="M0 1.6H237" stroke="#089de3" stroke-width="1.7"/></svg>
<svg class="b" style="left:253px;top:850px;" width="314" height="206" viewBox="0 0 314 206" fill="none"><path d="M69 67.5H291.20000000000005" stroke="#2c3145" stroke-width="1"/><path d="M69 80.1H291.20000000000005" stroke="#2c3145" stroke-width="1"/><path d="M69 92.7H291.20000000000005" stroke="#2c3145" stroke-width="1"/><path d="M69 105.3H291.20000000000005" stroke="#2c3145" stroke-width="1"/><path d="M69 118.0H291.20000000000005" stroke="#2c3145" stroke-width="1"/><path d="M69 130.6H291.20000000000005" stroke="#2c3145" stroke-width="1"/><path d="M69 143.2H291.20000000000005" stroke="#2c3145" stroke-width="1"/><path d="M69 155.8H291.20000000000005" stroke="#2c3145" stroke-width="1"/><path d="M69.0 156.0V74.3H70.6V87.4H72.2V85.3H73.8V85.7H75.4V83.6H77.1V78.3H78.7V92.1H80.3V86.5H81.9V81.0H83.5V75.8H85.1V87.3H86.7V75.7H88.3V82.5H89.9V74.2H91.5V80.3H93.2V84.3H94.8V79.0H96.4V96.5H98.0V77.1H99.6V94.1H101.2V82.6H102.8V84.5H104.4V80.1H106.0V78.5H107.6V88.9H109.3V77.1H110.9V80.2H112.5V90.6H114.1V82.7H115.7V82.1H117.3V82.2H118.9V84.1H120.5V74.4H122.1V91.8H123.7V79.8H125.4V80.9H127.0V82.1H128.6V87.9H130.2V74.3H131.8V78.3H133.4V80.9H135.0V93.1H136.6V79.4H138.2V74.4H139.8V83.7H141.5V84.0H143.1V84.6H144.7V79.2H146.3V81.3H147.9V83.2H149.5V74.8H151.1V83.1H152.7V88.2H154.3V78.8H155.9V83.2H157.6V79.2H159.2V84.7H160.8V82.6H162.4V75.3H164.0V94.0H165.6V79.4H167.2V99.1H168.8V83.9H170.4V80.3H172.0V75.3H173.7V80.0H175.3V86.8H176.9V77.6H178.5V101.8H180.1V79.0H181.7V75.7H183.3V83.2H184.9V85.5H186.5V78.6H188.2V82.6H189.8V79.2H191.4V96.5H193.0V83.3H194.6V88.5H196.2V87.9H197.8V80.6H199.4V83.8H201.0V94.1H202.6V76.3H204.3V79.2H205.9V83.0H207.5V74.9H209.1V80.5H210.7V81.3H212.3V87.3H213.9V74.3H215.5V84.2H217.1V76.1H218.7V85.8H220.4V92.7H222.0V78.4H223.6V80.7H225.2V80.7H226.8V81.3H228.4V79.3H230.0V82.5H231.6V79.9H233.2V90.7H234.8V79.6H236.5V77.4H238.1V87.8H239.7V76.4H241.3V101.3H242.9V82.9H244.5V95.4H246.1V93.8H247.7V77.2H249.3V77.3H250.9V80.8H252.6V76.6H254.2V84.6H255.8V85.1H257.4V87.9H259.0V86.3H260.6V82.8H262.2V80.0H263.8V74.9H265.4V77.3H267.0V93.1H268.7V77.3H270.3V82.8H271.9V80.8H273.5V99.3H275.1V78.4H276.7V75.9H278.3V82.9H279.9V81.8H281.5V82.8H283.1V81.7H284.8V94.0H286.4V82.4H288.0V84.7H289.6V92.4H291.2V156.0Z" fill="#5bc3c4"/><path d="M290.9 71.0V121.7" stroke="#232839" stroke-width="0.9" stroke-dasharray="2 2"/></svg>
<span class="t" style="left:277.06px;top:911.30px;font-size:10.5px;line-height:12px;color:#a0a6bb;letter-spacing:-0.083px;">70 MB/s</span>
<span class="t" style="left:277.06px;top:923.91px;font-size:10.5px;line-height:12px;color:#a0a6bb;letter-spacing:-0.083px;">60 MB/s</span>
<span class="t" style="left:277.06px;top:936.53px;font-size:10.5px;line-height:12px;color:#a0a6bb;letter-spacing:-0.083px;">50 MB/s</span>
<span class="t" style="left:277.06px;top:949.14px;font-size:10.5px;line-height:12px;color:#a0a6bb;letter-spacing:-0.083px;">40 MB/s</span>
<span class="t" style="left:277.06px;top:961.76px;font-size:10.5px;line-height:12px;color:#a0a6bb;letter-spacing:-0.083px;">30 MB/s</span>
<span class="t" style="left:277.06px;top:974.37px;font-size:10.5px;line-height:12px;color:#a0a6bb;letter-spacing:-0.083px;">20 MB/s</span>
<span class="t" style="left:277.06px;top:986.99px;font-size:10.5px;line-height:12px;color:#a0a6bb;letter-spacing:-0.083px;">10 MB/s</span>
<span class="t" style="left:282.82px;top:999.60px;font-size:10.5px;line-height:12px;color:#a0a6bb;letter-spacing:-0.082px;">0 MB/s</span>
<span class="t" style="left:307.96px;top:1011.60px;font-size:10.5px;line-height:12px;color:#a0a6bb;letter-spacing:-0.309px;">Apr 15</span>
<span class="t" style="left:381.96px;top:1011.60px;font-size:10.5px;line-height:12px;color:#a0a6bb;letter-spacing:-0.309px;">Apr 16</span>
<span class="t" style="left:455.96px;top:1011.60px;font-size:10.5px;line-height:12px;color:#a0a6bb;letter-spacing:-0.309px;">Apr 17</span>
<span class="t" style="left:500.44px;top:1011.60px;font-size:10.5px;line-height:12px;color:#a0a6bb;letter-spacing:0.055px;">6:00:00pm</span>
<div class="b" style="left:274px;top:1037.2px;width:7px;height:7px;background:#089de3;border-radius:1.5px;"></div>
<span class="t" style="left:285.50px;top:1034.70px;font-size:10.5px;line-height:12px;color:#a0a6bb;letter-spacing:0.341px;">Received</span>
<div class="b" style="left:341.5px;top:1037.2px;width:7px;height:7px;background:#5bc3c4;border-radius:1.5px;"></div>
<span class="t" style="left:353.00px;top:1034.70px;font-size:10.5px;line-height:12px;color:#a0a6bb;letter-spacing:0.350px;">Sent</span>
<svg class="b" style="left:577px;top:850px;" width="314" height="206" viewBox="0 0 314 206" fill="none"><path d="M68.29999999999995 67.5H290.70000000000005" stroke="#2c3145" stroke-width="1"/><path d="M68.29999999999995 82.2H290.70000000000005" stroke="#2c3145" stroke-width="1"/><path d="M68.29999999999995 96.9H290.70000000000005" stroke="#2c3145" stroke-width="1"/><path d="M68.29999999999995 111.6H290.70000000000005" stroke="#2c3145" stroke-width="1"/><path d="M68.29999999999995 126.4H290.70000000000005" stroke="#2c3145" stroke-width="1"/><path d="M68.29999999999995 141.1H290.70000000000005" stroke="#2c3145" stroke-width="1"/><path d="M68.29999999999995 155.8H290.70000000000005" stroke="#2c3145" stroke-width="1"/><path d="M68.3 156.0V93.3H69.9V96.9H71.5V79.4H73.1V78.0H74.7V84.0H76.3V82.7H77.9V79.4H79.5V74.9H81.1V84.7H82.7V74.8H84.3V81.1H85.9V77.4H87.5V88.2H89.1V84.3H90.7V73.3H92.3V87.5H93.9V80.6H95.5V74.2H97.1V86.0H98.7V83.8H100.3V73.2H101.9V77.4H103.5V86.0H105.1V80.2H106.7V77.7H108.3V84.7H109.9V78.2H111.5V79.7H113.1V75.5H114.7V101.1H116.3V91.8H117.9V74.9H119.5V82.9H121.1V83.7H122.7V76.0H124.3V78.1H125.9V82.6H127.5V94.9H129.1V76.9H130.7V77.5H132.3V93.9H133.9V100.2H135.5V78.9H137.1V88.4H138.7V101.2H140.3V90.4H141.9V90.3H143.5V81.4H145.1V77.1H146.7V76.1H148.3V84.9H149.9V75.9H151.5V103.7H153.1V77.5H154.7V85.5H156.3V82.3H157.9V84.9H159.5V91.0H161.1V85.1H162.7V76.4H164.3V80.7H165.9V77.0H167.5V83.8H169.1V76.6H170.7V74.2H172.3V85.7H173.9V77.0H175.5V77.6H177.1V73.0H178.7V80.8H180.3V80.5H181.9V94.1H183.5V84.5H185.1V84.3H186.7V80.9H188.3V92.8H189.9V96.6H191.5V87.3H193.1V82.0H194.7V79.3H196.3V77.3H197.9V82.9H199.5V73.5H201.1V74.2H202.7V78.7H204.3V79.0H205.9V73.0H207.5V93.8H209.1V78.0H210.7V79.9H212.3V76.1H213.9V77.2H215.5V73.7H217.1V92.0H218.7V82.7H220.3V91.6H221.9V81.2H223.5V75.0H225.1V73.3H226.7V76.4H228.3V96.5H229.9V76.5H231.5V78.0H233.1V72.8H234.7V77.5H236.3V80.2H237.9V90.5H239.5V93.3H241.1V91.0H242.7V88.8H244.3V93.2H245.9V103.1H247.5V76.0H249.1V76.3H250.7V78.8H252.3V77.1H253.9V82.6H255.5V88.8H257.1V89.3H258.7V85.4H260.3V77.2H261.9V85.0H263.5V80.7H265.1V85.8H266.7V87.7H268.3V73.8H269.9V81.9H271.5V75.4H273.1V101.8H274.7V73.9H276.3V77.4H277.9V94.5H279.5V78.8H281.1V96.9H282.7V73.2H284.3V92.5H285.9V73.7H287.5V81.0H289.1V77.7H290.7V156.0Z" fill="#5bc3c4"/><path d="M68.3 156.0V143.9H69.9V144.4H71.5V144.1H73.1V144.4H74.7V144.5H76.3V144.6H77.9V146.2H79.5V143.9H81.1V144.6H82.7V145.4H84.3V147.2H85.9V144.9H87.5V147.1H89.1V144.7H90.7V143.4H92.3V145.1H93.9V143.3H95.5V144.6H97.1V146.5H98.7V146.4H100.3V145.1H101.9V144.7H103.5V145.2H105.1V144.9H106.7V145.6H108.3V145.6H109.9V145.1H111.5V145.8H113.1V147.1H114.7V145.5H116.3V147.4H117.9V143.6H119.5V147.5H121.1V146.3H122.7V147.0H124.3V144.8H125.9V144.8H127.5V146.4H129.1V147.3H130.7V146.6H132.3V144.0H133.9V145.7H135.5V146.8H137.1V143.9H138.7V147.3H140.3V143.6H141.9V147.6H143.5V143.9H145.1V147.2H146.7V147.0H148.3V143.7H149.9V145.2H151.5V145.7H153.1V146.0H154.7V146.2H156.3V147.5H157.9V143.9H159.5V146.7H161.1V143.8H162.7V145.8H164.3V144.4H165.9V145.5H167.5V146.5H169.1V147.2H170.7V146.4H172.3V143.5H173.9V147.4H175.5V144.5H177.1V144.5H178.7V146.1H180.3V146.0H181.9V146.6H183.5V143.9H185.1V144.8H186.7V147.1H188.3V145.9H189.9V144.5H191.5V144.7H193.1V147.1H194.7V146.0H196.3V145.6H197.9V145.6H199.5V143.3H201.1V146.1H202.7V147.6H204.3V147.2H205.9V146.2H207.5V143.7H209.1V144.2H210.7V146.2H212.3V145.6H213.9V147.5H215.5V145.6H217.1V147.3H218.7V144.2H220.3V145.5H221.9V143.5H223.5V145.6H225.1V146.9H226.7V146.4H228.3V143.8H229.9V146.2H231.5V145.2H233.1V145.7H234.7V145.4H236.3V144.2H237.9V146.9H239.5V147.3H241.1V144.8H242.7V145.0H244.3V144.5H245.9V147.4H247.5V145.2H249.1V143.7H250.7V146.6H252.3V144.4H253.9V143.4H255.5V145.2H257.1V144.8H258.7V143.4H260.3V144.3H261.9V146.0H263.5V143.6H265.1V145.1H266.7V146.0H268.3V145.6H269.9V144.1H271.5V144.8H273.1V146.0H274.7V146.1H276.3V145.7H277.9V147.5H279.5V146.6H281.1V145.1H282.7V146.2H284.3V146.7H285.9V145.9H287.5V147.6H289.1V145.5H290.7V156.0Z" fill="#dc7b1e"/><path d="M290.4 71.0V121.7" stroke="#232839" stroke-width="0.9" stroke-dasharray="2 2"/></svg>
<span class="t" style="left:600.36px;top:911.30px;font-size:10.5px;line-height:12px;color:#a0a6bb;letter-spacing:-0.083px;">60 MB/s</span>
<span class="t" style="left:600.36px;top:926.02px;font-size:10.5px;line-height:12px;color:#a0a6bb;letter-spacing:-0.083px;">50 MB/s</span>
<span class="t" style="left:600.36px;top:940.73px;font-size:10.5px;line-height:12px;color:#a0a6bb;letter-spacing:-0.083px;">40 MB/s</span>
<span class="t" style="left:600.36px;top:955.45px;font-size:10.5px;line-height:12px;color:#a0a6bb;letter-spacing:-0.083px;">30 MB/s</span>
<span class="t" style="left:600.36px;top:970.17px;font-size:10.5px;line-height:12px;color:#a0a6bb;letter-spacing:-0.083px;">20 MB/s</span>
<span class="t" style="left:600.36px;top:984.88px;font-size:10.5px;line-height:12px;color:#a0a6bb;letter-spacing:-0.083px;">10 MB/s</span>
<span class="t" style="left:606.12px;top:999.60px;font-size:10.5px;line-height:12px;color:#a0a6bb;letter-spacing:-0.082px;">0 MB/s</span>
<span class="t" style="left:631.46px;top:1011.60px;font-size:10.5px;line-height:12px;color:#a0a6bb;letter-spacing:-0.309px;">Apr 15</span>
<span class="t" style="left:705.46px;top:1011.60px;font-size:10.5px;line-height:12px;color:#a0a6bb;letter-spacing:-0.309px;">Apr 16</span>
<span class="t" style="left:779.46px;top:1011.60px;font-size:10.5px;line-height:12px;color:#a0a6bb;letter-spacing:-0.309px;">Apr 17</span>
<span class="t" style="left:823.94px;top:1011.60px;font-size:10.5px;line-height:12px;color:#a0a6bb;letter-spacing:0.055px;">6:00:00pm</span>
<div class="b" style="left:598px;top:1037.2px;width:7px;height:7px;background:#089de3;border-radius:1.5px;"></div>
<span class="t" style="left:609.50px;top:1034.70px;font-size:10.5px;line-height:12px;color:#a0a6bb;letter-spacing:0.743px;">project-91b9dd59-418f-4993-8f5-test-bucke</span>
<span class="t" style="left:853.53px;top:1034.70px;font-size:10.5px;line-height:12px;color:#a0a6bb;letter-spacing:0.000px;">+3</span>
<svg class="b" style="left:901px;top:850px;" width="314" height="206" viewBox="0 0 314 206" fill="none"><path d="M68.29999999999995 67.5H290.9000000000001" stroke="#2c3145" stroke-width="1"/><path d="M68.29999999999995 82.2H290.9000000000001" stroke="#2c3145" stroke-width="1"/><path d="M68.29999999999995 96.9H290.9000000000001" stroke="#2c3145" stroke-width="1"/><path d="M68.29999999999995 111.6H290.9000000000001" stroke="#2c3145" stroke-width="1"/><path d="M68.29999999999995 126.4H290.9000000000001" stroke="#2c3145" stroke-width="1"/><path d="M68.29999999999995 141.1H290.9000000000001" stroke="#2c3145" stroke-width="1"/><path d="M68.29999999999995 155.8H290.9000000000001" stroke="#2c3145" stroke-width="1"/><path d="M68.3 156.0V76.0H69.9V75.6H71.5V76.7H73.1V70.8H74.7V81.8H76.3V81.4H77.9V73.1H79.5V90.9H81.1V82.7H82.7V80.3H84.3V70.1H85.9V67.5H87.5V74.1H89.1V69.9H90.7V82.3H92.3V78.5H93.9V76.5H95.5V81.0H97.1V85.6H98.7V87.9H100.3V67.5H101.9V74.5H103.5V80.7H105.1V77.9H106.7V81.8H108.3V84.6H109.9V80.8H111.5V71.8H113.1V68.0H114.7V81.4H116.3V70.1H117.9V79.3H119.5V86.3H121.1V73.1H122.7V68.1H124.4V69.3H126.0V80.1H127.6V70.5H129.2V81.8H130.8V83.5H132.4V74.0H134.0V82.0H135.6V69.2H137.2V72.9H138.8V85.9H140.4V72.8H142.0V77.8H143.6V85.5H145.2V82.4H146.8V67.7H148.4V93.6H150.0V70.6H151.6V78.3H153.2V85.6H154.8V72.8H156.4V67.7H158.0V80.3H159.6V72.5H161.2V91.9H162.8V84.1H164.4V90.7H166.0V70.7H167.6V83.2H169.2V68.9H170.8V83.9H172.4V83.4H174.0V68.1H175.6V83.3H177.2V70.6H178.8V87.5H180.4V79.5H182.0V79.6H183.6V86.8H185.2V70.4H186.8V83.1H188.4V68.5H190.0V70.1H191.6V74.0H193.2V73.8H194.8V76.4H196.4V69.3H198.0V70.8H199.6V86.8H201.2V76.1H202.8V84.6H204.4V78.1H206.0V68.5H207.6V75.0H209.2V86.9H210.8V81.8H212.4V73.5H214.0V77.4H215.6V78.6H217.2V74.1H218.8V79.3H220.4V68.1H222.0V90.4H223.6V90.8H225.2V71.1H226.8V71.3H228.4V81.4H230.0V68.6H231.6V67.6H233.2V77.7H234.8V72.5H236.5V76.0H238.1V67.5H239.7V78.3H241.3V83.5H242.9V86.6H244.5V79.4H246.1V82.9H247.7V80.5H249.3V71.9H250.9V74.1H252.5V76.9H254.1V78.0H255.7V79.3H257.3V71.0H258.9V79.1H260.5V94.6H262.1V74.0H263.7V72.5H265.3V87.6H266.9V76.6H268.5V68.9H270.1V67.4H271.7V70.2H273.3V85.0H274.9V86.1H276.5V73.8H278.1V67.5H279.7V72.9H281.3V83.6H282.9V75.7H284.5V82.0H286.1V77.9H287.7V83.6H289.3V72.2H290.9V156.0Z" fill="#089de3"/><path d="M68.3 156.0V149.7H69.9V149.4H71.5V150.3H73.1V149.5H74.7V150.0H76.3V149.0H77.9V149.4H79.5V150.0H81.1V148.4H82.7V148.9H84.3V149.6H85.9V148.2H87.5V148.6H89.1V149.8H90.7V149.5H92.3V149.3H93.9V149.1H95.5V149.2H97.1V148.5H98.7V149.9H100.3V149.6H101.9V149.4H103.5V149.7H105.1V149.6H106.7V149.2H108.3V150.2H109.9V149.3H111.5V148.5H113.1V149.3H114.7V149.3H116.3V149.2H117.9V149.4H119.5V149.2H121.1V150.0H122.7V147.8H124.4V149.7H126.0V149.1H127.6V148.5H129.2V150.2H130.8V149.0H132.4V149.2H134.0V149.4H135.6V149.0H137.2V149.5H138.8V148.6H140.4V149.4H142.0V149.9H143.6V148.9H145.2V149.3H146.8V149.3H148.4V148.3H150.0V149.2H151.6V149.2H153.2V149.4H154.8V150.3H156.4V149.8H158.0V149.7H159.6V150.3H161.2V149.8H162.8V148.2H164.4V148.5H166.0V148.6H167.6V149.7H169.2V149.2H170.8V147.9H172.4V149.5H174.0V150.1H175.6V150.3H177.2V149.4H178.8V148.3H180.4V150.1H182.0V149.5H183.6V148.5H185.2V148.8H186.8V149.5H188.4V149.8H190.0V149.3H191.6V149.8H193.2V147.6H194.8V148.2H196.4V148.7H198.0V148.3H199.6V149.5H201.2V149.3H202.8V149.6H204.4V149.9H206.0V149.2H207.6V149.6H209.2V150.1H210.8V149.6H212.4V149.5H214.0V149.9H215.6V149.3H217.2V149.8H218.8V149.3H220.4V149.3H222.0V149.0H223.6V149.6H225.2V149.1H226.8V149.8H228.4V149.4H230.0V148.7H231.6V149.2H233.2V149.1H234.8V149.8H236.5V148.0H238.1V149.3H239.7V150.0H241.3V150.3H242.9V149.5H244.5V149.4H246.1V149.5H247.7V149.9H249.3V149.5H250.9V148.8H252.5V149.0H254.1V150.0H255.7V149.2H257.3V148.6H258.9V150.3H260.5V149.7H262.1V150.0H263.7V149.7H265.3V148.7H266.9V149.8H268.5V148.3H270.1V150.3H271.7V149.2H273.3V149.1H274.9V148.0H276.5V149.7H278.1V149.3H279.7V147.9H281.3V148.9H282.9V148.8H284.5V149.3H286.1V149.4H287.7V148.8H289.3V149.5H290.9V156.0Z" fill="#43c0a8"/><path d="M68.3 156.0V149.9H69.9V149.5H71.5V150.3H73.1V150.2H74.7V150.2H76.3V150.3H77.9V149.7H79.5V150.2H81.1V149.2H82.7V149.4H84.3V149.6H85.9V149.9H87.5V150.4H89.1V149.8H90.7V149.6H92.3V149.3H93.9V149.5H95.5V149.8H97.1V149.7H98.7V149.9H100.3V149.6H101.9V149.8H103.5V149.7H105.1V149.6H106.7V150.1H108.3V150.3H109.9V149.7H111.5V149.6H113.1V149.9H114.7V149.8H116.3V149.4H117.9V149.6H119.5V149.2H121.1V150.2H122.7V149.7H124.4V149.8H126.0V150.2H127.6V149.4H129.2V150.4H130.8V149.7H132.4V149.3H134.0V149.4H135.6V149.7H137.2V149.6H138.8V149.9H140.4V149.5H142.0V149.9H143.6V149.4H145.2V149.5H146.8V149.3H148.4V149.8H150.0V149.3H151.6V149.4H153.2V149.4H154.8V150.4H156.4V149.8H158.0V149.7H159.6V150.3H161.2V149.8H162.8V149.5H164.4V150.0H166.0V149.6H167.6V149.7H169.2V149.2H170.8V149.2H172.4V149.5H174.0V150.1H175.6V150.4H177.2V150.3H178.8V149.4H180.4V150.1H182.0V149.6H183.6V149.5H185.2V149.4H186.8V150.3H188.4V149.8H190.0V149.3H191.6V149.8H193.2V149.3H194.8V150.0H196.4V149.4H198.0V149.6H199.6V149.5H201.2V149.4H202.8V149.8H204.4V149.9H206.0V149.5H207.6V149.6H209.2V150.1H210.8V149.6H212.4V149.5H214.0V150.4H215.6V149.5H217.2V150.3H218.8V150.0H220.4V149.4H222.0V149.4H223.6V149.6H225.2V149.6H226.8V149.8H228.4V149.9H230.0V150.2H231.6V149.2H233.2V149.4H234.8V149.9H236.5V149.8H238.1V149.8H239.7V150.4H241.3V150.3H242.9V149.5H244.5V150.1H246.1V149.6H247.7V150.2H249.3V149.8H250.9V149.8H252.5V149.6H254.1V150.1H255.7V149.3H257.3V149.6H258.9V150.3H260.5V149.9H262.1V150.1H263.7V149.7H265.3V149.6H266.9V149.9H268.5V150.2H270.1V150.3H271.7V150.2H273.3V149.7H274.9V149.6H276.5V149.8H278.1V149.6H279.7V149.4H281.3V149.8H282.9V150.1H284.5V149.8H286.1V149.8H287.7V150.0H289.3V149.6H290.9V156.0Z" fill="#10b27a"/><path d="M290.6 71.0V121.7" stroke="#232839" stroke-width="0.9" stroke-dasharray="2 2"/></svg>
<span class="t" style="left:924.36px;top:911.30px;font-size:10.5px;line-height:12px;color:#a0a6bb;letter-spacing:-0.083px;">60 MB/s</span>
<span class="t" style="left:924.36px;top:926.02px;font-size:10.5px;line-height:12px;color:#a0a6bb;letter-spacing:-0.083px;">50 MB/s</span>
<span class="t" style="left:924.36px;top:940.73px;font-size:10.5px;line-height:12px;color:#a0a6bb;letter-spacing:-0.083px;">40 MB/s</span>
<span class="t" style="left:924.36px;top:955.45px;font-size:10.5px;line-height:12px;color:#a0a6bb;letter-spacing:-0.083px;">30 MB/s</span>
<span class="t" style="left:924.36px;top:970.17px;font-size:10.5px;line-height:12px;color:#a0a6bb;letter-spacing:-0.083px;">20 MB/s</span>
<span class="t" style="left:924.36px;top:984.88px;font-size:10.5px;line-height:12px;color:#a0a6bb;letter-spacing:-0.083px;">10 MB/s</span>
<span class="t" style="left:930.12px;top:999.60px;font-size:10.5px;line-height:12px;color:#a0a6bb;letter-spacing:-0.082px;">0 MB/s</span>
<span class="t" style="left:955.46px;top:1011.60px;font-size:10.5px;line-height:12px;color:#a0a6bb;letter-spacing:-0.309px;">Apr 15</span>
<span class="t" style="left:1029.46px;top:1011.60px;font-size:10.5px;line-height:12px;color:#a0a6bb;letter-spacing:-0.309px;">Apr 16</span>
<span class="t" style="left:1103.46px;top:1011.60px;font-size:10.5px;line-height:12px;color:#a0a6bb;letter-spacing:-0.309px;">Apr 17</span>
<span class="t" style="left:1148.44px;top:1011.60px;font-size:10.5px;line-height:12px;color:#a0a6bb;letter-spacing:0.055px;">6:00:00pm</span>
<div class="b" style="left:922px;top:1037.2px;width:7px;height:7px;background:#089de3;border-radius:1.5px;"></div>
<span class="t" style="left:933.50px;top:1034.70px;font-size:10.5px;line-height:12px;color:#a0a6bb;letter-spacing:0.419px;">ReadObject sent</span>
<div class="b" style="left:1027.5px;top:1037.2px;width:7px;height:7px;background:#5bc3c4;border-radius:1.5px;"></div>
<span class="t" style="left:1039.00px;top:1034.70px;font-size:10.5px;line-height:12px;color:#a0a6bb;letter-spacing:0.462px;">WriteObject received</span>
<span class="t" style="left:1177.53px;top:1034.70px;font-size:10.5px;line-height:12px;color:#a0a6bb;letter-spacing:0.000px;">+1</span>
<svg class="b" style="left:253px;top:1101px;" width="476" height="206" viewBox="0 0 476 206" fill="none"><path d="M59 67.5H453.29999999999995" stroke="#2c3145" stroke-width="1"/><path d="M59 85.1H453.29999999999995" stroke="#2c3145" stroke-width="1"/><path d="M59 102.7H453.29999999999995" stroke="#2c3145" stroke-width="1"/><path d="M59 120.3H453.29999999999995" stroke="#2c3145" stroke-width="1"/><path d="M59 137.9H453.29999999999995" stroke="#2c3145" stroke-width="1"/><path d="M59 155.5H453.29999999999995" stroke="#2c3145" stroke-width="1"/><path d="M59.0 155.7V91.0H60.9V108.4H62.8V109.1H64.6V111.5H66.5V108.7H68.4V93.2H70.3V115.8H72.1V117.6H74.0V113.1H75.9V115.5H77.8V119.3H79.7V88.8H81.5V94.1H83.4V113.9H85.3V115.2H87.2V85.6H89.0V113.3H90.9V109.3H92.8V107.6H94.7V84.6H96.6V86.6H98.4V103.7H100.3V85.6H102.2V101.4H104.1V103.5H105.9V95.4H107.8V106.9H109.7V106.7H111.6V87.0H113.5V105.0H115.3V86.2H117.2V92.0H119.1V109.4H121.0V88.4H122.8V94.4H124.7V103.2H126.6V86.1H128.5V90.7H130.3V89.0H132.2V88.3H134.1V108.9H136.0V113.0H137.9V115.1H139.7V115.5H141.6V95.6H143.5V88.3H145.4V86.0H147.2V93.3H149.1V115.8H151.0V113.7H152.9V84.8H154.8V87.1H156.6V116.2H158.5V90.2H160.4V91.2H162.3V95.2H164.1V87.2H166.0V97.2H167.9V85.0H169.8V108.5H171.7V103.6H173.5V107.1H175.4V87.4H177.3V109.6H179.2V109.7H181.0V91.6H182.9V85.8H184.8V89.5H186.7V103.6H188.6V103.4H190.4V100.8H192.3V101.5H194.2V107.2H196.1V100.9H197.9V100.9H199.8V104.0H201.7V85.2H203.6V91.7H205.5V84.7H207.3V107.0H209.2V109.0H211.1V119.0H213.0V113.3H214.8V87.2H216.7V86.5H218.6V88.2H220.5V113.8H222.4V84.6H224.2V111.4H226.1V86.9H228.0V112.6H229.9V92.8H231.7V110.2H233.6V112.6H235.5V84.1H237.4V108.3H239.3V93.1H241.1V89.9H243.0V85.9H244.9V110.0H246.8V109.6H248.6V113.1H250.5V89.7H252.4V111.0H254.3V108.5H256.1V96.2H258.0V102.6H259.9V84.5H261.8V84.4H263.7V101.1H265.5V89.3H267.4V103.4H269.3V105.3H271.2V103.8H273.0V109.5H274.9V107.8H276.8V110.9H278.7V111.1H280.6V109.7H282.4V116.4H284.3V90.7H286.2V92.2H288.1V93.8H289.9V115.9H291.8V117.0H293.7V90.2H295.6V109.6H297.5V109.8H299.3V111.2H301.2V108.6H303.1V85.8H305.0V108.0H306.8V109.0H308.7V91.2H310.6V88.4H312.5V88.4H314.4V110.8H316.2V96.8H318.1V109.9H320.0V92.9H321.9V106.9H323.7V91.5H325.6V87.0H327.5V90.4H329.4V92.0H331.3V87.2H333.1V100.0H335.0V101.7H336.9V97.8H338.8V101.5H340.6V100.7H342.5V89.5H344.4V105.4H346.3V90.0H348.2V109.4H350.0V108.3H351.9V116.1H353.8V108.8H355.7V95.6H357.5V110.5H359.4V115.9H361.3V85.5H363.2V86.4H365.1V89.4H366.9V84.8H368.8V112.5H370.7V92.7H372.6V114.7H374.4V110.9H376.3V86.8H378.2V85.9H380.1V90.8H382.0V115.1H383.8V92.1H385.7V118.8H387.6V113.7H389.5V92.2H391.3V90.4H393.2V103.8H395.1V108.1H397.0V106.2H398.8V88.1H400.7V89.9H402.6V104.9H404.5V87.8H406.4V91.8H408.2V100.3H410.1V101.5H412.0V88.3H413.9V85.8H415.7V112.0H417.6V106.9H419.5V107.7H421.4V112.6H423.3V110.6H425.1V85.8H427.0V109.8H428.9V88.4H430.8V106.7H432.6V86.0H434.5V105.4H436.4V109.1H438.3V84.7H440.2V108.0H442.0V115.9H443.9V111.7H445.8V114.4H447.7V90.6H449.5V116.7H451.4V89.9H453.3V155.7Z" fill="#5bc3c4"/><path d="M453.0 71.0V121.6" stroke="#232839" stroke-width="0.9" stroke-dasharray="2 2"/></svg>
<span class="t" style="left:276.25px;top:1162.30px;font-size:10.5px;line-height:12px;color:#a0a6bb;letter-spacing:-0.073px;">25 rps</span>
<span class="t" style="left:276.25px;top:1179.90px;font-size:10.5px;line-height:12px;color:#a0a6bb;letter-spacing:-0.073px;">20 rps</span>
<span class="t" style="left:276.25px;top:1197.50px;font-size:10.5px;line-height:12px;color:#a0a6bb;letter-spacing:-0.073px;">15 rps</span>
<span class="t" style="left:276.25px;top:1215.10px;font-size:10.5px;line-height:12px;color:#a0a6bb;letter-spacing:-0.073px;">10 rps</span>
<span class="t" style="left:282.01px;top:1232.70px;font-size:10.5px;line-height:12px;color:#a0a6bb;letter-spacing:-0.070px;">5 rps</span>
<span class="t" style="left:282.01px;top:1250.30px;font-size:10.5px;line-height:12px;color:#a0a6bb;letter-spacing:-0.070px;">0 rps</span>
<span class="t" style="left:299.96px;top:1262.30px;font-size:10.5px;line-height:12px;color:#a0a6bb;letter-spacing:-0.309px;">Apr 15</span>
<span class="t" style="left:351.99px;top:1262.30px;font-size:10.5px;line-height:12px;color:#a0a6bb;letter-spacing:0.055px;">12:00:00pm</span>
<span class="t" style="left:430.96px;top:1262.30px;font-size:10.5px;line-height:12px;color:#a0a6bb;letter-spacing:-0.309px;">Apr 16</span>
<span class="t" style="left:482.99px;top:1262.30px;font-size:10.5px;line-height:12px;color:#a0a6bb;letter-spacing:0.055px;">12:00:00pm</span>
<span class="t" style="left:561.96px;top:1262.30px;font-size:10.5px;line-height:12px;color:#a0a6bb;letter-spacing:-0.309px;">Apr 17</span>
<span class="t" style="left:613.99px;top:1262.30px;font-size:10.5px;line-height:12px;color:#a0a6bb;letter-spacing:0.055px;">12:00:00pm</span>
<div class="b" style="left:274px;top:1288.2px;width:7px;height:7px;background:#089de3;border-radius:1.5px;"></div>
<span class="t" style="left:285.50px;top:1285.70px;font-size:10.5px;line-height:12px;color:#a0a6bb;letter-spacing:0.389px;">Hit</span>
<div class="b" style="left:309.0px;top:1288.2px;width:7px;height:7px;background:#5bc3c4;border-radius:1.5px;"></div>
<span class="t" style="left:320.50px;top:1285.70px;font-size:10.5px;line-height:12px;color:#a0a6bb;letter-spacing:0.355px;">Miss</span>
<svg class="b" style="left:739px;top:1101px;" width="476" height="206" viewBox="0 0 476 206" fill="none"><path d="M68.29999999999995 67.5H452.70000000000005" stroke="#2c3145" stroke-width="1"/><path d="M68.29999999999995 85.1H452.70000000000005" stroke="#2c3145" stroke-width="1"/><path d="M68.29999999999995 102.7H452.70000000000005" stroke="#2c3145" stroke-width="1"/><path d="M68.29999999999995 120.3H452.70000000000005" stroke="#2c3145" stroke-width="1"/><path d="M68.29999999999995 137.9H452.70000000000005" stroke="#2c3145" stroke-width="1"/><path d="M68.29999999999995 155.5H452.70000000000005" stroke="#2c3145" stroke-width="1"/><path d="M68.3 155.7V85.1H70.1V84.8H72.0V99.4H73.8V84.2H75.6V72.2H77.5V102.1H79.3V104.9H81.1V72.4H82.9V111.9H84.8V70.2H86.6V106.6H88.4V73.3H90.3V103.7H92.1V105.9H93.9V100.7H95.8V99.8H97.6V103.1H99.4V78.3H101.2V93.3H103.1V98.8H104.9V90.3H106.7V70.9H108.6V96.5H110.4V98.0H112.2V82.5H114.1V94.4H115.9V101.7H117.7V94.6H119.6V70.5H121.4V102.6H123.2V98.8H125.0V95.0H126.9V101.3H128.7V94.8H130.5V94.6H132.4V71.8H134.2V97.9H136.0V81.4H137.9V94.5H139.7V96.1H141.5V102.9H143.3V103.9H145.2V72.8H147.0V106.4H148.8V82.7H150.7V108.9H152.5V111.7H154.3V112.1H156.2V104.6H158.0V104.4H159.8V109.1H161.7V108.0H163.5V106.7H165.3V100.5H167.1V97.1H169.0V101.0H170.8V84.9H172.6V98.7H174.5V81.7H176.3V99.0H178.1V100.0H180.0V95.5H181.8V98.0H183.6V97.0H185.5V95.1H187.3V97.3H189.1V94.8H190.9V99.5H192.8V80.3H194.6V94.6H196.4V93.4H198.3V90.8H200.1V83.9H201.9V80.5H203.8V94.1H205.6V85.7H207.4V70.2H209.2V73.2H211.1V106.3H212.9V107.5H214.7V109.9H216.6V74.3H218.4V112.8H220.2V82.8H222.1V104.8H223.9V79.8H225.7V111.2H227.6V109.1H229.4V105.1H231.2V104.2H233.0V99.3H234.9V98.0H236.7V100.4H238.5V72.6H240.4V100.0H242.2V71.1H244.0V104.6H245.9V105.3H247.7V98.2H249.5V71.9H251.3V74.1H253.2V96.2H255.0V73.5H256.8V100.5H258.7V71.0H260.5V70.5H262.3V94.7H264.2V71.4H266.0V79.2H267.8V83.9H269.7V94.1H271.5V74.2H273.3V72.5H275.1V81.0H277.0V98.4H278.8V104.3H280.6V106.9H282.5V101.6H284.3V106.8H286.1V103.8H288.0V109.0H289.8V102.6H291.6V105.7H293.4V107.2H295.3V71.2H297.1V99.3H298.9V99.1H300.8V82.7H302.6V99.3H304.4V75.2H306.3V72.2H308.1V80.1H309.9V100.9H311.8V100.4H313.6V79.3H315.4V106.4H317.2V106.8H319.1V76.3H320.9V100.9H322.7V97.8H324.6V73.5H326.4V73.6H328.2V94.9H330.1V92.4H331.9V91.5H333.7V79.3H335.5V91.7H337.4V70.7H339.2V72.3H341.0V73.1H342.9V98.3H344.7V77.0H346.5V98.6H348.4V72.8H350.2V74.0H352.0V75.6H353.9V76.1H355.7V80.7H357.5V78.8H359.3V99.1H361.2V102.7H363.0V102.1H364.8V77.7H366.7V99.6H368.5V75.9H370.3V105.2H372.2V77.3H374.0V105.2H375.8V85.8H377.7V111.2H379.5V110.0H381.3V85.6H383.1V109.0H385.0V81.8H386.8V108.2H388.6V82.0H390.5V101.3H392.3V97.7H394.1V70.9H396.0V91.6H397.8V93.9H399.6V95.1H401.4V78.1H403.3V92.3H405.1V90.0H406.9V91.5H408.8V97.9H410.6V98.6H412.4V70.8H414.3V79.1H416.1V81.6H417.9V71.7H419.8V104.9H421.6V77.3H423.4V101.1H425.2V101.2H427.1V97.0H428.9V100.2H430.7V77.4H432.6V102.0H434.4V78.1H436.2V98.9H438.1V83.3H439.9V107.5H441.7V77.7H443.5V107.6H445.4V107.1H447.2V106.8H449.0V72.2H450.9V109.9H452.7V155.7Z" fill="#5bc3c4"/><path d="M452.4 71.0V121.6" stroke="#232839" stroke-width="0.9" stroke-dasharray="2 2"/></svg>
<span class="t" style="left:762.36px;top:1162.30px;font-size:10.5px;line-height:12px;color:#a0a6bb;letter-spacing:-0.083px;">25 MB/s</span>
<span class="t" style="left:762.36px;top:1179.90px;font-size:10.5px;line-height:12px;color:#a0a6bb;letter-spacing:-0.083px;">20 MB/s</span>
<span class="t" style="left:762.36px;top:1197.50px;font-size:10.5px;line-height:12px;color:#a0a6bb;letter-spacing:-0.083px;">15 MB/s</span>
<span class="t" style="left:762.36px;top:1215.10px;font-size:10.5px;line-height:12px;color:#a0a6bb;letter-spacing:-0.083px;">10 MB/s</span>
<span class="t" style="left:768.12px;top:1232.70px;font-size:10.5px;line-height:12px;color:#a0a6bb;letter-spacing:-0.082px;">5 MB/s</span>
<span class="t" style="left:768.12px;top:1250.30px;font-size:10.5px;line-height:12px;color:#a0a6bb;letter-spacing:-0.082px;">0 MB/s</span>
<span class="t" style="left:794.46px;top:1262.30px;font-size:10.5px;line-height:12px;color:#a0a6bb;letter-spacing:-0.309px;">Apr 15</span>
<span class="t" style="left:844.99px;top:1262.30px;font-size:10.5px;line-height:12px;color:#a0a6bb;letter-spacing:0.055px;">12:00:00pm</span>
<span class="t" style="left:922.46px;top:1262.30px;font-size:10.5px;line-height:12px;color:#a0a6bb;letter-spacing:-0.309px;">Apr 16</span>
<span class="t" style="left:972.99px;top:1262.30px;font-size:10.5px;line-height:12px;color:#a0a6bb;letter-spacing:0.055px;">12:00:00pm</span>
<span class="t" style="left:1050.46px;top:1262.30px;font-size:10.5px;line-height:12px;color:#a0a6bb;letter-spacing:-0.309px;">Apr 17</span>
<span class="t" style="left:1100.99px;top:1262.30px;font-size:10.5px;line-height:12px;color:#a0a6bb;letter-spacing:0.055px;">12:00:00pm</span>
<div class="b" style="left:760px;top:1288.2px;width:7px;height:7px;background:#089de3;border-radius:1.5px;"></div>
<span class="t" style="left:771.50px;top:1285.70px;font-size:10.5px;line-height:12px;color:#a0a6bb;letter-spacing:0.389px;">Hit</span>
<div class="b" style="left:795.0px;top:1288.2px;width:7px;height:7px;background:#5bc3c4;border-radius:1.5px;"></div>
<span class="t" style="left:806.50px;top:1285.70px;font-size:10.5px;line-height:12px;color:#a0a6bb;letter-spacing:0.355px;">Miss</span>
</main>
</div></body></html>
